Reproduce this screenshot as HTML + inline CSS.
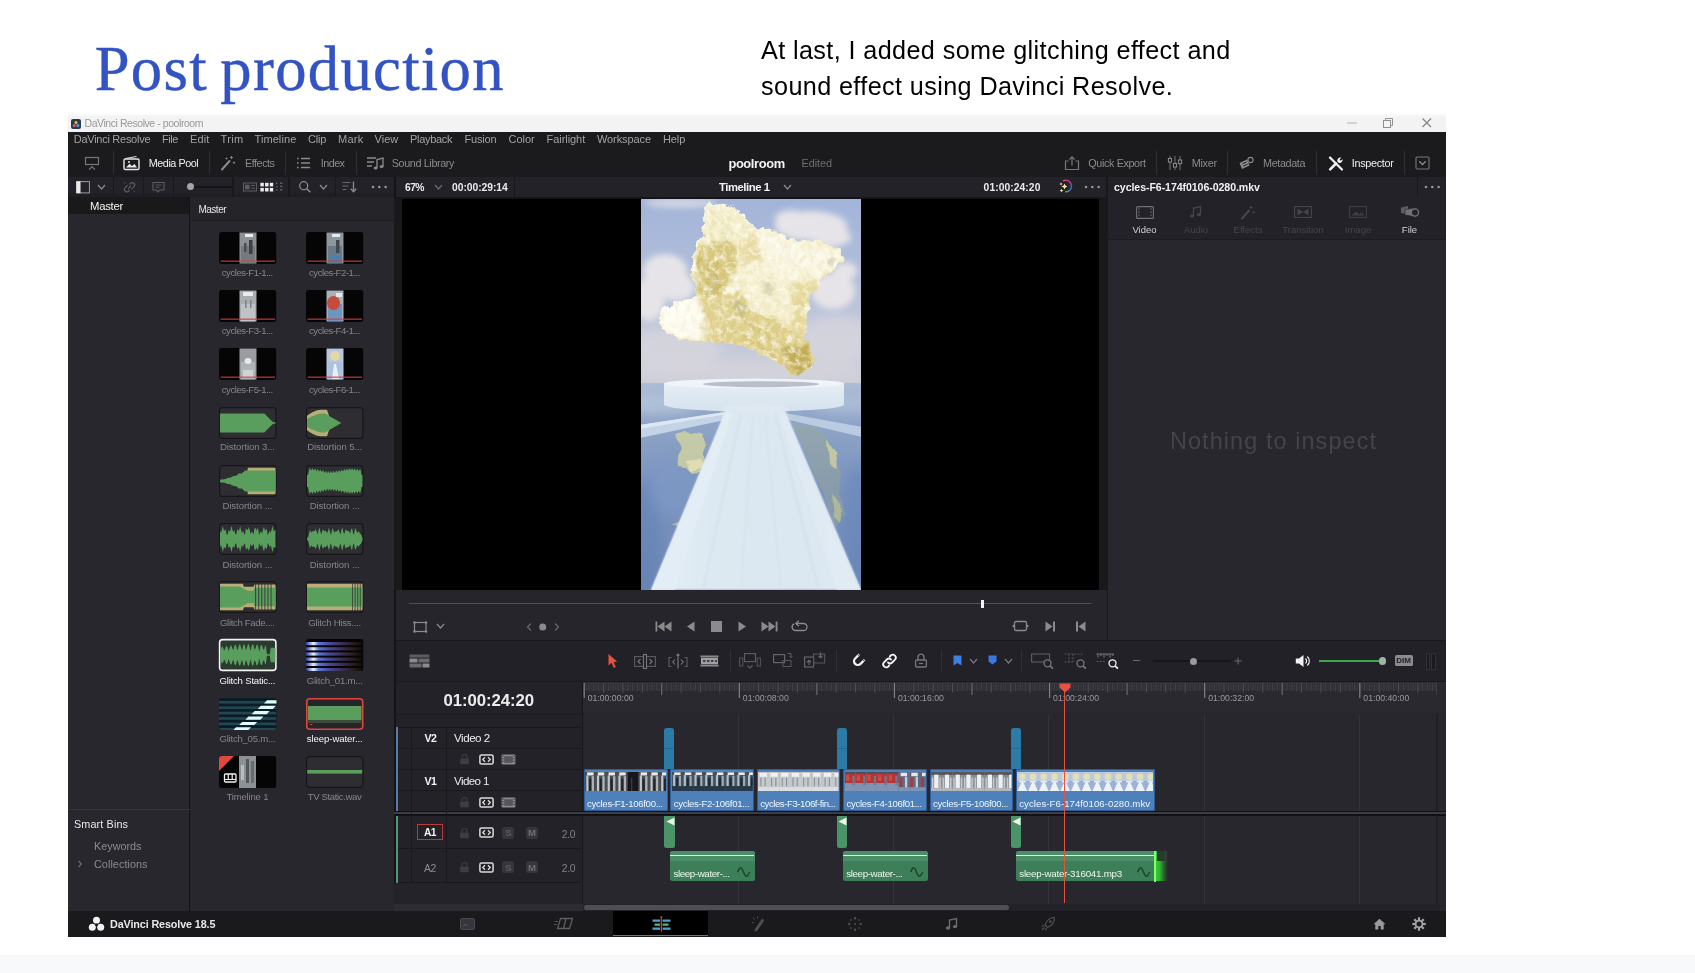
<!DOCTYPE html>
<html><head><meta charset="utf-8"><title>Post production</title>
<style>
html,body{margin:0;padding:0;background:#fff;}
body{width:1695px;height:973px;position:relative;overflow:hidden;font-family:"Liberation Sans",sans-serif;}
body div,body span,body svg{position:absolute;display:block;white-space:nowrap;}
body svg{overflow:visible;}
</style></head><body>
<div id="root" style="left:0;top:0;width:1695px;height:973px;will-change:transform;">
<div style="left:0.00px;top:955.00px;width:1695.00px;height:18.00px;background:#f8f9fb;"></div>
<span style="left:94.7px;top:32.5px;font-family:'Liberation Serif',serif;font-size:62.6px;line-height:72px;color:#3352c4;letter-spacing:1.33px;word-spacing:-4.500px;-webkit-text-stroke:0.450px #3352c4;">Post production</span>
<span style="left:761px;top:31.6px;font-size:25.2px;line-height:36.3px;color:#000;white-space:pre;letter-spacing:0.39px;">At last, I added some glitching effect and
sound effect using Davinci Resolve.</span>
<div style="left:68.00px;top:113.50px;width:1378.00px;height:18.50px;background:linear-gradient(180deg,#fbfbfb 0,#f3f3f3 3px);"></div>
<div style="left:68.00px;top:132.00px;width:1378.00px;height:44.50px;background:#1b1b1e;"></div>
<div style="left:68.00px;top:176.50px;width:1378.00px;height:20.50px;background:#222228;"></div>
<div style="left:68.00px;top:193.00px;width:326.00px;height:4.00px;background:#1e1e23;"></div>
<div style="left:68.00px;top:197.00px;width:1378.00px;height:713.50px;background:#28272e;"></div>
<div style="left:68.00px;top:910.50px;width:1378.00px;height:26.00px;background:#1a1a1d;"></div>
<svg style="left:70.50px;top:118.50px;" width="10" height="10" viewBox="0 0 10 10"><rect width="10" height="10" rx="2" fill="#2b3a4a"/><circle cx="5" cy="3.4" r="1.5" fill="#e8c23a"/><circle cx="3.2" cy="6.6" r="1.5" fill="#e05a4a"/><circle cx="6.8" cy="6.6" r="1.5" fill="#4aa0d8"/></svg>
<span style="left:84.50px;top:116.90px;font-size:10.5px;line-height:12.60px;color:#9a9a9a;font-weight:400;letter-spacing:-0.438px;">DaVinci Resolve - poolroom</span>
<svg style="left:1346.00px;top:118.00px;" width="12" height="10" viewBox="0 0 12 10"><path d="M1 5H11" stroke="#b0b0b0" stroke-width="1"/></svg>
<svg style="left:1383.00px;top:118.00px;" width="10" height="10" viewBox="0 0 10 10"><rect x="0.5" y="2.5" width="7" height="7" fill="none" stroke="#909090" stroke-width="1"/><path d="M2.5 2.5V0.5H9.5V7.5H7.5" fill="none" stroke="#909090" stroke-width="1"/></svg>
<svg style="left:1422.00px;top:118.00px;" width="10" height="10" viewBox="0 0 10 10"><path d="M0.5 0.5L9 9M9 0.5L0.5 9" stroke="#808080" stroke-width="1.1"/></svg>
<span style="left:73.75px;top:132.70px;font-size:11px;line-height:13.20px;color:#a2a2a4;font-weight:400;letter-spacing:-0.268px;">DaVinci Resolve</span>
<span style="left:162.00px;top:132.70px;font-size:11px;line-height:13.20px;color:#a2a2a4;font-weight:400;letter-spacing:-0.492px;">File</span>
<span style="left:190.00px;top:132.70px;font-size:11px;line-height:13.20px;color:#a2a2a4;font-weight:400;letter-spacing:0.098px;">Edit</span>
<span style="left:220.50px;top:132.70px;font-size:11px;line-height:13.20px;color:#a2a2a4;font-weight:400;letter-spacing:0.390px;">Trim</span>
<span style="left:254.50px;top:132.70px;font-size:11px;line-height:13.20px;color:#a2a2a4;font-weight:400;letter-spacing:0.084px;">Timeline</span>
<span style="left:308.00px;top:132.70px;font-size:11px;line-height:13.20px;color:#a2a2a4;font-weight:400;letter-spacing:-0.233px;">Clip</span>
<span style="left:338.00px;top:132.70px;font-size:11px;line-height:13.20px;color:#a2a2a4;font-weight:400;letter-spacing:0.269px;">Mark</span>
<span style="left:374.50px;top:132.70px;font-size:11px;line-height:13.20px;color:#a2a2a4;font-weight:400;letter-spacing:0.035px;">View</span>
<span style="left:410.00px;top:132.70px;font-size:11px;line-height:13.20px;color:#a2a2a4;font-weight:400;letter-spacing:-0.305px;">Playback</span>
<span style="left:464.50px;top:132.70px;font-size:11px;line-height:13.20px;color:#a2a2a4;font-weight:400;letter-spacing:-0.203px;">Fusion</span>
<span style="left:508.50px;top:132.70px;font-size:11px;line-height:13.20px;color:#a2a2a4;font-weight:400;letter-spacing:-0.009px;">Color</span>
<span style="left:546.50px;top:132.70px;font-size:11px;line-height:13.20px;color:#a2a2a4;font-weight:400;letter-spacing:-0.047px;">Fairlight</span>
<span style="left:597.00px;top:132.70px;font-size:11px;line-height:13.20px;color:#a2a2a4;font-weight:400;letter-spacing:-0.102px;">Workspace</span>
<span style="left:663.00px;top:132.70px;font-size:11px;line-height:13.20px;color:#a2a2a4;font-weight:400;letter-spacing:-0.124px;">Help</span>
<svg style="left:84.00px;top:156.00px;" width="16" height="15" viewBox="0 0 16 15"><rect x="1.5" y="1.5" width="13" height="7" fill="none" stroke="#77777b" stroke-width="1.2"/><path d="M5 13.5L8 10.8L11 13.5" fill="none" stroke="#77777b" stroke-width="1.3"/></svg>
<div style="left:112.80px;top:151.00px;width:1.00px;height:24.00px;background:#2e2e33;"></div>
<svg style="left:122.00px;top:155.00px;" width="19" height="16" viewBox="0 0 19 16"><path d="M3.5 3.5L14.5 1.5" stroke="#d8d8d8" stroke-width="1.2" fill="none"/><rect x="2" y="4" width="15" height="10.5" rx="1.2" fill="none" stroke="#e8e8e8" stroke-width="1.4"/><path d="M4 12.5L7.5 8.8L10 11L12.5 9L15 12.5Z" fill="#e8e8e8"/><circle cx="7" cy="7" r="1" fill="#e8e8e8"/></svg>
<span style="left:148.75px;top:156.52px;font-size:10.8px;line-height:12.96px;color:#f0f0f0;font-weight:400;letter-spacing:-0.448px;">Media Pool</span>
<div style="left:209.00px;top:151.00px;width:1.00px;height:24.00px;background:#2e2e33;"></div>
<svg style="left:220.00px;top:155.00px;" width="17" height="16" viewBox="0 0 17 16"><path d="M2 14.5L9.5 6" stroke="#8b8b8e" stroke-width="2" stroke-linecap="round"/><path d="M11.5 1v3M10 2.5h3M14 6.5v2.4M12.8 7.7h2.4M6.5 2.5v2M5.5 3.5h2" stroke="#8b8b8e" stroke-width="0.9"/></svg>
<span style="left:245.00px;top:156.52px;font-size:10.8px;line-height:12.96px;color:#8b8b8e;font-weight:400;letter-spacing:-0.469px;">Effects</span>
<div style="left:284.50px;top:151.00px;width:1.00px;height:24.00px;background:#2e2e33;"></div>
<svg style="left:296.00px;top:156.00px;" width="15" height="14" viewBox="0 0 15 14"><path d="M1 2.5h1.6M5 2.5h9M1 7h1.6M5 7h9M1 11.5h1.6M5 11.5h9" stroke="#8b8b8e" stroke-width="1.4"/></svg>
<span style="left:320.75px;top:156.52px;font-size:10.8px;line-height:12.96px;color:#8b8b8e;font-weight:400;letter-spacing:-0.543px;">Index</span>
<div style="left:355.80px;top:151.00px;width:1.00px;height:24.00px;background:#2e2e33;"></div>
<svg style="left:366.00px;top:155.00px;" width="19" height="16" viewBox="0 0 19 16"><path d="M1 3h9M1 7h7M1 11h5" stroke="#8b8b8e" stroke-width="1.3"/><path d="M11 13V4.5L17 3V11.5" fill="none" stroke="#8b8b8e" stroke-width="1.3"/><ellipse cx="9.6" cy="13" rx="1.9" ry="1.5" fill="#8b8b8e"/><ellipse cx="15.6" cy="11.6" rx="1.9" ry="1.5" fill="#8b8b8e"/></svg>
<span style="left:391.75px;top:156.52px;font-size:10.8px;line-height:12.96px;color:#8b8b8e;font-weight:400;letter-spacing:-0.374px;">Sound Library</span>
<span style="left:728.40px;top:155.76px;font-size:12.9px;line-height:15.48px;color:#f2f2f2;font-weight:700;letter-spacing:-0.382px;">poolroom</span>
<span style="left:801.50px;top:156.52px;font-size:10.8px;line-height:12.96px;color:#6f6f73;font-weight:400;letter-spacing:-0.025px;">Edited</span>
<svg style="left:1064.00px;top:155.00px;" width="16" height="16" viewBox="0 0 16 16"><path d="M4.5 6H1.5V14.5H14.5V6H11.5" fill="none" stroke="#77777b" stroke-width="1.2"/><path d="M8 10.5V2M5.3 4.6L8 1.8L10.7 4.6" fill="none" stroke="#77777b" stroke-width="1.2"/></svg>
<span style="left:1088.30px;top:156.52px;font-size:10.8px;line-height:12.96px;color:#8b8b8e;font-weight:400;letter-spacing:-0.375px;">Quick Export</span>
<div style="left:1155.80px;top:151.00px;width:1.00px;height:24.00px;background:#2e2e33;"></div>
<svg style="left:1167.00px;top:155.00px;" width="16" height="16" viewBox="0 0 16 16"><path d="M3 1v14M8 1v14M13 1v14" stroke="#77777b" stroke-width="1"/><rect x="1.4" y="3.5" width="3.2" height="3.6" fill="#1b1b1e" stroke="#8b8b8e" stroke-width="1"/><rect x="6.4" y="8.5" width="3.2" height="3.6" fill="#1b1b1e" stroke="#8b8b8e" stroke-width="1"/><rect x="11.4" y="5" width="3.2" height="3.6" fill="#1b1b1e" stroke="#8b8b8e" stroke-width="1"/></svg>
<span style="left:1191.75px;top:156.52px;font-size:10.8px;line-height:12.96px;color:#8b8b8e;font-weight:400;letter-spacing:-0.287px;">Mixer</span>
<div style="left:1227.00px;top:151.00px;width:1.00px;height:24.00px;background:#2e2e33;"></div>
<svg style="left:1238.00px;top:156.00px;" width="17" height="14" viewBox="0 0 17 14"><path d="M1.5 7L9 3.5L11.5 9.5L4 13Z" fill="#8b8b8e"/><circle cx="12.5" cy="4" r="2.6" fill="none" stroke="#8b8b8e" stroke-width="1.1"/><path d="M4.5 7.8L8.5 6M5.3 10L9.5 8.2" stroke="#1b1b1e" stroke-width="0.9"/></svg>
<span style="left:1263.00px;top:156.52px;font-size:10.8px;line-height:12.96px;color:#8b8b8e;font-weight:400;letter-spacing:-0.361px;">Metadata</span>
<div style="left:1315.80px;top:151.00px;width:1.00px;height:24.00px;background:#2e2e33;"></div>
<svg style="left:1328.00px;top:155.50px;" width="16" height="15" viewBox="0 0 16 15"><path d="M2 1.5L14 13.5" stroke="#f2f2f2" stroke-width="2.2" stroke-linecap="round"/><path d="M2.2 13.3L8 7.5" stroke="#f2f2f2" stroke-width="2.6" stroke-linecap="round"/><path d="M9.5 5.8C8.8 3.5 10.5 1 13.3 1.6L11.6 3.6L12.6 4.8L14.6 3.2C15 5.8 12.6 7.4 10.6 6.8Z" fill="#f2f2f2"/></svg>
<span style="left:1351.75px;top:156.52px;font-size:10.8px;line-height:12.96px;color:#f0f0f0;font-weight:400;letter-spacing:-0.303px;">Inspector</span>
<div style="left:1404.00px;top:151.00px;width:1.00px;height:24.00px;background:#2e2e33;"></div>
<svg style="left:1415.00px;top:156.00px;" width="15" height="14" viewBox="0 0 15 14"><rect x="1" y="1" width="13" height="12" rx="1" fill="none" stroke="#77777b" stroke-width="1.1"/><path d="M4.3 5.3L7.5 8.5L10.7 5.3" fill="none" stroke="#8b8b8e" stroke-width="1.3"/></svg>
<svg style="left:75.50px;top:180.50px;" width="14" height="12.5" viewBox="0 0 14 12.5"><rect x="0.6" y="0.6" width="12.8" height="11.3" fill="none" stroke="#9c9ca0" stroke-width="1"/><rect x="0.3" y="0.3" width="4.200" height="11.900" fill="#ececec"/></svg>
<svg style="left:96.80px;top:184.20px;" width="9" height="6" viewBox="0 0 9 6"><path d="M1 1L4.5 5L8 1" fill="none" stroke="#8b8b8e" stroke-width="1.2"/></svg>
<div style="left:112.55px;top:177.00px;width:1.50px;height:19.50px;background:#19191c;"></div>
<svg style="left:121.50px;top:180.00px;" width="15" height="14" viewBox="0 0 15 14"><path d="M6.2 8.8L8.8 5.6M5.5 5.2L3 7.8a2.4 2.4 0 0 0 3.6 3.2L7.6 10M9.5 9.2L12 6.6a2.4 2.4 0 0 0 -3.6 -3.2L7.4 4.4" fill="none" stroke="#5d5d62" stroke-width="1.2"/><path d="M2 2l1.5 1.5M13 12l-1.5 -1.5" stroke="#5d5d62" stroke-width="0.8"/></svg>
<div style="left:142.55px;top:177.00px;width:1.50px;height:19.50px;background:#19191c;"></div>
<svg style="left:151.00px;top:180.50px;" width="15" height="13" viewBox="0 0 15 13"><path d="M2 1.5H13V9H8.5L7 11L5.5 9H2Z" fill="none" stroke="#5d5d62" stroke-width="1.1"/><path d="M4.5 4h6M4.5 6.3h4" stroke="#5d5d62" stroke-width="0.9"/></svg>
<div style="left:172.55px;top:177.00px;width:1.50px;height:19.50px;background:#19191c;"></div>
<div style="left:194.00px;top:185.90px;width:38.50px;height:1.80px;background:#151518;"></div>
<div style="left:187.30px;top:183.30px;width:7.00px;height:7.00px;background:#a5a5a8;border-radius:50%;"></div>
<div style="left:232.25px;top:177.00px;width:1.50px;height:19.50px;background:#19191c;"></div>
<svg style="left:243.00px;top:182.00px;" width="14" height="10" viewBox="0 0 14 10"><rect x="0.5" y="1" width="13" height="8" fill="none" stroke="#5d5d62" stroke-width="1"/><rect x="2" y="2.7" width="4.5" height="4.6" fill="#5d5d62"/><path d="M8 3.5h4M8 6.2h4" stroke="#5d5d62" stroke-width="1"/></svg>
<svg style="left:259.50px;top:181.70px;" width="14" height="11" viewBox="0 0 14 11"><rect x="0.4" y="0.8" width="3.4" height="3.600" fill="#f0f0f0"/><rect x="0.4" y="5.8999999999999995" width="3.4" height="3.600" fill="#f0f0f0"/><rect x="5.1000000000000005" y="0.8" width="3.4" height="3.600" fill="#f0f0f0"/><rect x="5.1000000000000005" y="5.8999999999999995" width="3.4" height="3.600" fill="#f0f0f0"/><rect x="9.8" y="0.8" width="3.4" height="3.600" fill="#f0f0f0"/><rect x="9.8" y="5.8999999999999995" width="3.4" height="3.600" fill="#f0f0f0"/></svg>
<svg style="left:275.00px;top:182.00px;" width="9" height="10" viewBox="0 0 9 10"><rect x="1" y="0.5" width="1.4" height="1.5" fill="#5d5d62"/><rect x="1" y="3.8" width="1.4" height="1.5" fill="#5d5d62"/><rect x="1" y="7.1" width="1.4" height="1.5" fill="#5d5d62"/><rect x="5" y="0.5" width="2.4" height="1.5" fill="#5d5d62"/><rect x="5" y="3.8" width="2.4" height="1.5" fill="#5d5d62"/><rect x="5" y="7.1" width="2.4" height="1.5" fill="#5d5d62"/></svg>
<div style="left:288.05px;top:177.00px;width:1.50px;height:19.50px;background:#19191c;"></div>
<svg style="left:298.00px;top:180.00px;" width="14" height="14" viewBox="0 0 14 14"><circle cx="5.7" cy="5.7" r="4" fill="none" stroke="#8b8b8e" stroke-width="1.3"/><path d="M8.7 8.7L12.3 12.3" stroke="#8b8b8e" stroke-width="1.5"/></svg>
<svg style="left:318.50px;top:184.40px;" width="9" height="6" viewBox="0 0 9 6"><path d="M1 1L4.5 5L8 1" fill="none" stroke="#8b8b8e" stroke-width="1.2"/></svg>
<div style="left:334.55px;top:177.00px;width:1.50px;height:19.50px;background:#19191c;"></div>
<svg style="left:342.00px;top:181.00px;" width="16" height="12" viewBox="0 0 16 12"><path d="M0.5 1.5h8M0.5 5h6M0.5 8.5h4" stroke="#6a6a6f" stroke-width="1.2"/><path d="M11.5 0.5V10.5M8.8 7.8L11.5 10.8L14.2 7.8" fill="none" stroke="#8b8b8e" stroke-width="1.3"/></svg>
<svg style="left:371.20px;top:184.70px;" width="16.6" height="4" viewBox="0 0 16.6 4"><circle cx="2.0" cy="2" r="1.3" fill="#96969a"/><circle cx="8.3" cy="2" r="1.3" fill="#96969a"/><circle cx="14.6" cy="2" r="1.3" fill="#96969a"/></svg>
<div style="left:394.00px;top:176.50px;width:2.40px;height:21.00px;background:#141418;"></div>
<span style="left:405.00px;top:181.82px;font-size:10.3px;line-height:12.36px;color:#ececec;font-weight:700;letter-spacing:-0.558px;">67%</span>
<svg style="left:433.80px;top:184.20px;" width="9" height="6" viewBox="0 0 9 6"><path d="M1 1L4.5 5L8 1" fill="none" stroke="#6a6a6f" stroke-width="1.2"/></svg>
<span style="left:452.00px;top:181.82px;font-size:10.3px;line-height:12.36px;color:#ececec;font-weight:700;letter-spacing:-0.037px;">00:00:29:14</span>
<div style="left:513.75px;top:177.00px;width:1.50px;height:19.50px;background:#19191c;"></div>
<span style="left:719.00px;top:180.72px;font-size:11.3px;line-height:13.56px;color:#f2f2f2;font-weight:700;letter-spacing:-0.451px;">Timeline 1</span>
<svg style="left:782.80px;top:184.30px;" width="9" height="6" viewBox="0 0 9 6"><path d="M1 1L4.5 5L8 1" fill="none" stroke="#8b8b8e" stroke-width="1.2"/></svg>
<span style="left:983.60px;top:181.82px;font-size:10.3px;line-height:12.36px;color:#ececec;font-weight:700;letter-spacing:0.068px;">01:00:24:20</span>
<svg style="left:1058.20px;top:178.60px;" width="14" height="14" viewBox="0 0 14 14"><path d="M7.500 1.200a5.800 5.800 0 0 1 5.600 4" fill="none" stroke="#c23c8e" stroke-width="1.500"/><path d="M13.100 5.200a5.800 5.800 0 0 1 -1.300 6" fill="none" stroke="#4a5fd0" stroke-width="1.500"/><path d="M11.800 11.200a5.800 5.800 0 0 1 -4.800 1.600" fill="none" stroke="#3aa37a" stroke-width="1.500"/><path d="M7.500 1.200a5.800 5.800 0 0 0 -2.500 0.700" fill="none" stroke="#d05a6a" stroke-width="1.400"/><path d="M6.500 4.500l0.900 2.100l2.100 0.900l-2.100 0.900l-0.900 2.100l-0.900 -2.100l-2.100 -0.900l2.100 -0.900z" fill="#f3e6b0"/><path d="M3 3.300l0.500 1.100l1.100 0.500l-1.100 0.500l-0.500 1.100l-0.500 -1.100l-1.100 -0.500l1.100 -0.500zM3.500 9.800l0.600 1.300l1.300 0.600l-1.300 0.600l-0.600 1.300l-0.600 -1.300l-1.300 -0.600l1.300 -0.600z" fill="#f3e6b0"/></svg>
<svg style="left:1083.50px;top:184.70px;" width="16.6" height="4" viewBox="0 0 16.6 4"><circle cx="2.0" cy="2" r="1.3" fill="#96969a"/><circle cx="8.3" cy="2" r="1.3" fill="#96969a"/><circle cx="14.6" cy="2" r="1.3" fill="#96969a"/></svg>
<div style="left:1105.80px;top:176.50px;width:2.20px;height:21.00px;background:#19191c;"></div>
<span style="left:1114.00px;top:181.04px;font-size:10.6px;line-height:12.72px;color:#f2f2f2;font-weight:700;letter-spacing:-0.074px;">cycles-F6-174f0106-0280.mkv</span>
<div style="left:1416.55px;top:177.00px;width:1.50px;height:19.50px;background:#19191c;"></div>
<svg style="left:1423.70px;top:184.70px;" width="16.6" height="4" viewBox="0 0 16.6 4"><circle cx="2.0" cy="2" r="1.3" fill="#96969a"/><circle cx="8.3" cy="2" r="1.3" fill="#96969a"/><circle cx="14.6" cy="2" r="1.3" fill="#96969a"/></svg>
<div style="left:190.20px;top:196.50px;width:203.60px;height:23.50px;background:#242429;"></div>
<div style="left:68.00px;top:197.00px;width:122.00px;height:17.00px;background:#19191c;"></div>
<span style="left:90.00px;top:199.62px;font-size:11.3px;line-height:13.56px;color:#f2f2f2;font-weight:400;letter-spacing:-0.247px;">Master</span>
<div style="left:188.70px;top:197.00px;width:1.50px;height:713.50px;background:#131317;"></div>
<div style="left:393.80px;top:197.00px;width:8.20px;height:393.00px;background:#19191c;"></div>
<div style="left:393.80px;top:590.00px;width:1.20px;height:51.00px;background:#19191c;"></div>
<span style="left:198.40px;top:204.00px;font-size:10.0px;line-height:12.00px;color:#e4e4e4;font-weight:400;letter-spacing:-0.472px;">Master</span>
<div style="left:191.00px;top:220.00px;width:202.80px;height:1.00px;background:#1c1c1f;"></div>
<div style="left:68.00px;top:808.50px;width:121.50px;height:1.00px;background:#35353b;"></div>
<span style="left:74.00px;top:817.52px;font-size:10.8px;line-height:12.96px;color:#e8e8e8;font-weight:400;letter-spacing:0.132px;">Smart Bins</span>
<span style="left:94.00px;top:839.52px;font-size:10.8px;line-height:12.96px;color:#8b8b8e;font-weight:400;letter-spacing:0.012px;">Keywords</span>
<span style="left:94.00px;top:857.52px;font-size:10.8px;line-height:12.96px;color:#8b8b8e;font-weight:400;letter-spacing:0.068px;">Collections</span>
<svg style="left:76.50px;top:860.00px;" width="6" height="8" viewBox="0 0 6 8"><path d="M1.5 1L4.5 4L1.5 7" fill="none" stroke="#6a6a6f" stroke-width="1.1"/></svg>
<svg style="left:218.75px;top:232.00px;" width="57.5" height="32" viewBox="0 0 57.5 32"><clipPath id="tc00"><rect width="57.5" height="32" rx="3"/></clipPath><g clip-path="url(#tc00)"><rect width="57.5" height="32" fill="#050506"/><rect x="20.5" y="0.5" width="17" height="31" fill="#8d9194"/><rect x="22" y="14" width="14" height="17.5" fill="#6f7478" opacity="0.8"/><rect x="26" y="2" width="8" height="3" fill="#e8ecef"/><rect x="30" y="8" width="3.5" height="14" fill="#3d4145"/><rect x="25" y="11" width="2.5" height="9" fill="#4a4e52"/><rect x="1.5" y="28.6" width="54.5" height="1.1" fill="#d33c3c"/></g></svg>
<svg style="left:306.00px;top:232.00px;" width="57.5" height="32" viewBox="0 0 57.5 32"><clipPath id="tc10"><rect width="57.5" height="32" rx="3"/></clipPath><g clip-path="url(#tc10)"><rect width="57.5" height="32" fill="#050506"/><rect x="20.5" y="0.5" width="17" height="31" fill="#90979c"/><rect x="22" y="14" width="14" height="17.5" fill="#5d7386" opacity="0.8"/><rect x="26" y="2" width="8" height="3" fill="#e4eaee"/><rect x="30" y="8" width="3.5" height="13" fill="#41474c"/><rect x="24" y="24" width="11" height="6" fill="#4f7fa8"/><rect x="1.5" y="28.6" width="54.5" height="1.1" fill="#d33c3c"/></g></svg>
<svg style="left:218.75px;top:290.00px;" width="57.5" height="32" viewBox="0 0 57.5 32"><clipPath id="tc01"><rect width="57.5" height="32" rx="3"/></clipPath><g clip-path="url(#tc01)"><rect width="57.5" height="32" fill="#050506"/><rect x="20.5" y="0.5" width="17" height="31" fill="#a9adb0"/><rect x="22" y="14" width="14" height="17.5" fill="#c4c7c9" opacity="0.8"/><rect x="24" y="2" width="10" height="4" fill="#e9ecee"/><rect x="26" y="10" width="1.5" height="8" fill="#7c8084"/><rect x="31" y="10" width="1.5" height="8" fill="#7c8084"/><rect x="1.5" y="28.6" width="54.5" height="1.1" fill="#d33c3c"/></g></svg>
<svg style="left:306.00px;top:290.00px;" width="57.5" height="32" viewBox="0 0 57.5 32"><clipPath id="tc11"><rect width="57.5" height="32" rx="3"/></clipPath><g clip-path="url(#tc11)"><rect width="57.5" height="32" fill="#050506"/><rect x="20.5" y="0.5" width="17" height="31" fill="#a8b0b8"/><rect x="22" y="14" width="14" height="17.5" fill="#5f8fc0" opacity="0.8"/><ellipse cx="27.5" cy="13" rx="6.5" ry="7" fill="#c84a3c"/><rect x="30" y="3" width="6" height="4" fill="#e4e8ec"/><rect x="1.5" y="28.6" width="54.5" height="1.1" fill="#d33c3c"/></g></svg>
<svg style="left:218.75px;top:348.00px;" width="57.5" height="32" viewBox="0 0 57.5 32"><clipPath id="tc02"><rect width="57.5" height="32" rx="3"/></clipPath><g clip-path="url(#tc02)"><rect width="57.5" height="32" fill="#050506"/><rect x="20.5" y="0.5" width="17" height="31" fill="#9a9da0"/><rect x="22" y="14" width="14" height="17.5" fill="#b7babc" opacity="0.8"/><ellipse cx="29" cy="13" rx="3.5" ry="3" fill="#e6e8ea"/><rect x="24" y="22" width="10" height="8" fill="#d0d3d5"/><rect x="1.5" y="28.6" width="54.5" height="1.1" fill="#d33c3c"/></g></svg>
<svg style="left:306.00px;top:348.00px;" width="57.5" height="32" viewBox="0 0 57.5 32"><clipPath id="tc12"><rect width="57.5" height="32" rx="3"/></clipPath><g clip-path="url(#tc12)"><rect width="57.5" height="32" fill="#050506"/><rect x="20.5" y="0.5" width="17" height="31" fill="#b9c6dc"/><rect x="22" y="14" width="14" height="17.5" fill="#a7c0dc" opacity="0.8"/><ellipse cx="29" cy="8" rx="5" ry="5" fill="#e3d9a4"/><path d="M26 31L28 16H30L33 31Z" fill="#e9f0f6"/><rect x="1.5" y="28.6" width="54.5" height="1.1" fill="#d33c3c"/></g></svg>
<svg style="left:218.75px;top:406.70px;" width="57.5" height="32" viewBox="0 0 57.5 32"><rect x="0.6" y="0.6" width="56.3" height="30.8" rx="3" fill="#2d2d32" stroke="#17171a" stroke-width="1.2"/><polygon points="1.0,6.5 2.0,6.5 2.9,6.5 3.9,6.5 4.8,6.5 5.8,6.5 6.7,6.5 7.7,6.5 8.7,6.5 9.6,6.5 10.6,6.5 11.5,6.5 12.5,6.5 13.4,6.5 14.4,6.5 15.4,6.5 16.3,6.5 17.3,6.5 18.2,6.5 19.2,6.5 20.1,6.5 21.1,6.5 22.1,6.5 23.0,6.5 24.0,6.5 24.9,6.5 25.9,6.5 26.8,6.5 27.8,6.5 28.8,6.5 29.7,6.5 30.7,6.5 31.6,6.5 32.6,6.5 33.5,6.5 34.5,6.5 35.4,6.5 36.4,6.5 37.4,6.5 38.3,6.5 39.3,6.5 40.2,6.5 41.2,6.5 42.1,6.5 43.1,6.5 44.1,6.5 45.0,6.5 46.0,7.1 46.9,8.0 47.9,9.0 48.8,10.0 49.8,10.9 50.8,11.9 51.7,12.9 52.7,13.8 53.6,14.8 54.6,15.3 55.5,15.3 56.5,15.3 56.5,16.7 55.5,16.7 54.6,16.7 53.6,17.2 52.7,18.2 51.7,19.1 50.8,20.1 49.8,21.1 48.8,22.0 47.9,23.0 46.9,24.0 46.0,24.9 45.0,25.5 44.1,25.5 43.1,25.5 42.1,25.5 41.2,25.5 40.2,25.5 39.3,25.5 38.3,25.5 37.4,25.5 36.4,25.5 35.4,25.5 34.5,25.5 33.5,25.5 32.6,25.5 31.6,25.5 30.7,25.5 29.7,25.5 28.8,25.5 27.8,25.5 26.8,25.5 25.9,25.5 24.9,25.5 24.0,25.5 23.0,25.5 22.1,25.5 21.1,25.5 20.1,25.5 19.2,25.5 18.2,25.5 17.3,25.5 16.3,25.5 15.4,25.5 14.4,25.5 13.4,25.5 12.5,25.5 11.5,25.5 10.6,25.5 9.6,25.5 8.7,25.5 7.7,25.5 6.7,25.5 5.8,25.5 4.8,25.5 3.9,25.5 2.9,25.5 2.0,25.5 1.0,25.5" fill="#5a9e5e"/></svg>
<svg style="left:306.00px;top:406.70px;" width="57.5" height="32" viewBox="0 0 57.5 32"><rect x="0.6" y="0.6" width="56.3" height="30.8" rx="3" fill="#2d2d32" stroke="#17171a" stroke-width="1.2"/><polygon points="1.0,8.7 2.0,8.1 2.9,7.5 3.9,6.8 4.8,6.2 5.8,5.7 6.7,5.1 7.7,4.7 8.7,4.2 9.6,3.8 10.6,3.5 11.5,3.2 12.5,3.0 13.4,2.9 14.4,2.8 15.4,2.8 16.3,2.8 17.3,2.8 18.2,2.8 19.2,2.8 20.1,2.8 21.1,3.1 22.1,6.0 23.0,8.8 24.0,11.7 24.9,14.5 25.9,16.0 26.8,16.0 27.8,16.0 28.8,16.0 29.7,16.0 30.7,16.0 31.6,16.0 32.6,16.0 33.5,16.0 34.5,16.0 35.4,16.0 36.4,16.0 37.4,16.0 38.3,16.0 39.3,16.0 40.2,16.0 41.2,16.0 42.1,16.0 43.1,16.0 44.1,16.0 45.0,16.0 46.0,16.0 46.9,16.0 47.9,16.0 48.8,16.0 49.8,16.0 50.8,16.0 51.7,16.0 52.7,16.0 53.6,16.0 54.6,16.0 55.5,16.0 56.5,16.0 56.5,16.0 55.5,16.0 54.6,16.0 53.6,16.0 52.7,16.0 51.7,16.0 50.8,16.0 49.8,16.0 48.8,16.0 47.9,16.0 46.9,16.0 46.0,16.0 45.0,16.0 44.1,16.0 43.1,16.0 42.1,16.0 41.2,16.0 40.2,16.0 39.3,16.0 38.3,16.0 37.4,16.0 36.4,16.0 35.4,16.0 34.5,16.0 33.5,16.0 32.6,16.0 31.6,16.0 30.7,16.0 29.7,16.0 28.8,16.0 27.8,16.0 26.8,16.0 25.9,16.0 24.9,17.5 24.0,20.3 23.0,23.2 22.1,26.0 21.1,28.9 20.1,29.2 19.2,29.2 18.2,29.2 17.3,29.2 16.3,29.2 15.4,29.2 14.4,29.2 13.4,29.1 12.5,29.0 11.5,28.8 10.6,28.5 9.6,28.2 8.7,27.8 7.7,27.3 6.7,26.9 5.8,26.3 4.8,25.8 3.9,25.2 2.9,24.5 2.0,23.9 1.0,23.3" fill="#b9ac74"/><polygon points="1.0,12.1 2.0,11.6 2.9,11.1 3.9,10.6 4.8,10.1 5.8,9.6 6.7,9.2 7.7,8.8 8.7,8.4 9.6,8.0 10.6,7.7 11.5,7.4 12.5,7.1 13.4,6.9 14.4,6.7 15.4,6.6 16.3,6.5 17.3,6.5 18.2,6.5 19.2,6.7 20.1,7.3 21.1,7.8 22.1,8.3 23.0,8.9 24.0,9.4 24.9,10.0 25.9,10.5 26.8,11.1 27.8,11.6 28.8,12.2 29.7,12.7 30.7,13.3 31.6,13.8 32.6,14.4 33.5,14.9 34.5,15.5 35.4,16.0 36.4,16.0 37.4,16.0 38.3,16.0 39.3,16.0 40.2,16.0 41.2,16.0 42.1,16.0 43.1,16.0 44.1,16.0 45.0,16.0 46.0,16.0 46.9,16.0 47.9,16.0 48.8,16.0 49.8,16.0 50.8,16.0 51.7,16.0 52.7,16.0 53.6,16.0 54.6,16.0 55.5,16.0 56.5,16.0 56.5,16.0 55.5,16.0 54.6,16.0 53.6,16.0 52.7,16.0 51.7,16.0 50.8,16.0 49.8,16.0 48.8,16.0 47.9,16.0 46.9,16.0 46.0,16.0 45.0,16.0 44.1,16.0 43.1,16.0 42.1,16.0 41.2,16.0 40.2,16.0 39.3,16.0 38.3,16.0 37.4,16.0 36.4,16.0 35.4,16.0 34.5,16.5 33.5,17.1 32.6,17.6 31.6,18.2 30.7,18.7 29.7,19.3 28.8,19.8 27.8,20.4 26.8,20.9 25.9,21.5 24.9,22.0 24.0,22.6 23.0,23.1 22.1,23.7 21.1,24.2 20.1,24.7 19.2,25.3 18.2,25.5 17.3,25.5 16.3,25.5 15.4,25.4 14.4,25.3 13.4,25.1 12.5,24.9 11.5,24.6 10.6,24.3 9.6,24.0 8.7,23.6 7.7,23.2 6.7,22.8 5.8,22.4 4.8,21.9 3.9,21.4 2.9,20.9 2.0,20.4 1.0,19.9" fill="#5a9e5e"/></svg>
<svg style="left:218.75px;top:464.90px;" width="57.5" height="32" viewBox="0 0 57.5 32"><rect x="0.6" y="0.6" width="56.3" height="30.8" rx="3" fill="#2d2d32" stroke="#17171a" stroke-width="1.2"/><polygon points="1.0,16.0 2.0,16.0 2.9,16.0 3.9,16.0 4.8,16.0 5.8,16.0 6.7,16.0 7.7,16.0 8.7,16.0 9.6,16.0 10.6,16.0 11.5,16.0 12.5,16.0 13.4,16.0 14.4,16.0 15.4,16.0 16.3,16.0 17.3,16.0 18.2,16.0 19.2,16.0 20.1,16.0 21.1,16.0 22.1,16.0 23.0,16.0 24.0,16.0 24.9,16.0 25.9,16.0 26.8,16.0 27.8,16.0 28.8,2.8 29.7,2.8 30.7,2.8 31.6,2.8 32.6,2.8 33.5,2.8 34.5,2.8 35.4,2.8 36.4,2.8 37.4,2.8 38.3,2.8 39.3,2.8 40.2,2.8 41.2,2.8 42.1,2.8 43.1,2.8 44.1,2.8 45.0,2.8 46.0,2.8 46.9,2.8 47.9,2.8 48.8,2.8 49.8,2.8 50.8,2.8 51.7,2.8 52.7,2.8 53.6,2.8 54.6,2.8 55.5,2.8 56.5,2.8 56.5,29.2 55.5,29.2 54.6,29.2 53.6,29.2 52.7,29.2 51.7,29.2 50.8,29.2 49.8,29.2 48.8,29.2 47.9,29.2 46.9,29.2 46.0,29.2 45.0,29.2 44.1,29.2 43.1,29.2 42.1,29.2 41.2,29.2 40.2,29.2 39.3,29.2 38.3,29.2 37.4,29.2 36.4,29.2 35.4,29.2 34.5,29.2 33.5,29.2 32.6,29.2 31.6,29.2 30.7,29.2 29.7,29.2 28.8,29.2 27.8,16.0 26.8,16.0 25.9,16.0 24.9,16.0 24.0,16.0 23.0,16.0 22.1,16.0 21.1,16.0 20.1,16.0 19.2,16.0 18.2,16.0 17.3,16.0 16.3,16.0 15.4,16.0 14.4,16.0 13.4,16.0 12.5,16.0 11.5,16.0 10.6,16.0 9.6,16.0 8.7,16.0 7.7,16.0 6.7,16.0 5.8,16.0 4.8,16.0 3.9,16.0 2.9,16.0 2.0,16.0 1.0,16.0" fill="#b9ac74"/><polygon points="1.0,14.7 2.0,14.6 2.9,14.5 3.9,14.3 4.8,14.4 5.8,14.0 6.7,13.9 7.7,13.3 8.7,13.0 9.6,13.1 10.6,12.6 11.5,13.0 12.5,11.8 13.4,11.7 14.4,10.9 15.4,10.8 16.3,11.2 17.3,10.3 18.2,10.5 19.2,8.6 20.1,8.8 21.1,8.2 22.1,8.4 23.0,8.7 24.0,7.0 24.9,7.1 25.9,4.9 26.8,5.9 27.8,5.3 28.8,5.4 29.7,5.4 30.7,5.4 31.6,5.4 32.6,5.4 33.5,5.4 34.5,5.4 35.4,5.4 36.4,5.4 37.4,5.4 38.3,5.4 39.3,5.4 40.2,5.4 41.2,5.4 42.1,5.4 43.1,5.4 44.1,5.4 45.0,5.4 46.0,5.4 46.9,5.4 47.9,5.4 48.8,5.4 49.8,5.4 50.8,5.4 51.7,5.4 52.7,5.4 53.6,5.4 54.6,5.4 55.5,5.4 56.5,5.4 56.5,26.6 55.5,26.6 54.6,26.6 53.6,26.6 52.7,26.6 51.7,26.6 50.8,26.6 49.8,26.6 48.8,26.6 47.9,26.6 46.9,26.6 46.0,26.6 45.0,26.6 44.1,26.6 43.1,26.6 42.1,26.6 41.2,26.6 40.2,26.6 39.3,26.6 38.3,26.6 37.4,26.6 36.4,26.6 35.4,26.6 34.5,26.6 33.5,26.6 32.6,26.6 31.6,26.6 30.7,26.6 29.7,26.6 28.8,26.6 27.8,26.7 26.8,26.1 25.9,27.1 24.9,24.9 24.0,25.0 23.0,23.3 22.1,23.6 21.1,23.8 20.1,23.2 19.2,23.4 18.2,21.5 17.3,21.7 16.3,20.8 15.4,21.2 14.4,21.1 13.4,20.3 12.5,20.2 11.5,19.0 10.6,19.4 9.6,18.9 8.7,19.0 7.7,18.7 6.7,18.1 5.8,18.0 4.8,17.6 3.9,17.7 2.9,17.5 2.0,17.4 1.0,17.3" fill="#5a9e5e"/></svg>
<svg style="left:306.00px;top:464.90px;" width="57.5" height="32" viewBox="0 0 57.5 32"><rect x="0.6" y="0.6" width="56.3" height="30.8" rx="3" fill="#2d2d32" stroke="#17171a" stroke-width="1.2"/><polygon points="1.0,10.1 2.0,10.1 2.9,5.2 3.9,2.8 4.8,5.2 5.8,4.6 6.7,3.1 7.7,5.8 8.7,4.1 9.6,4.0 10.6,6.4 11.5,4.0 12.5,5.3 13.4,6.6 14.4,4.3 15.4,6.7 16.3,6.6 17.3,5.0 18.2,7.8 19.2,6.4 20.1,5.9 21.1,8.4 22.1,6.0 23.0,6.9 24.0,8.4 24.9,5.8 25.9,7.7 26.8,7.7 27.8,5.6 28.8,8.1 29.7,6.6 30.7,5.6 31.6,7.9 32.6,5.4 33.5,5.7 34.5,7.1 35.4,4.3 36.4,5.9 37.4,6.0 38.3,3.6 39.3,6.0 40.2,4.7 41.2,3.4 42.1,5.9 43.1,3.6 44.1,3.8 45.0,5.6 46.0,3.0 46.9,4.5 47.9,5.3 48.8,3.0 49.8,5.5 50.8,4.9 51.7,3.6 52.7,6.4 53.6,4.6 54.6,4.7 55.5,10.1 56.5,10.1 56.5,21.9 55.5,21.9 54.6,27.3 53.6,27.4 52.7,25.6 51.7,28.4 50.8,27.1 49.8,26.5 48.8,29.0 47.9,26.7 46.9,27.5 46.0,29.0 45.0,26.4 44.1,28.2 43.1,28.4 42.1,26.1 41.2,28.6 40.2,27.3 39.3,26.0 38.3,28.4 37.4,26.0 36.4,26.1 35.4,27.7 34.5,24.9 33.5,26.3 32.6,26.6 31.6,24.1 30.7,26.4 29.7,25.4 28.8,23.9 27.8,26.4 26.8,24.3 25.9,24.3 24.9,26.2 24.0,23.6 23.0,25.1 22.1,26.0 21.1,23.6 20.1,26.1 19.2,25.6 18.2,24.2 17.3,27.0 16.3,25.4 15.4,25.3 14.4,27.7 13.4,25.4 12.5,26.7 11.5,28.0 10.6,25.6 9.6,28.0 8.7,27.9 7.7,26.2 6.7,28.9 5.8,27.4 4.8,26.8 3.9,29.2 2.9,26.8 2.0,21.9 1.0,21.9" fill="#5a9e5e"/></svg>
<svg style="left:218.75px;top:523.30px;" width="57.5" height="32" viewBox="0 0 57.5 32"><rect x="0.6" y="0.6" width="56.3" height="30.8" rx="3" fill="#2d2d32" stroke="#17171a" stroke-width="1.2"/><polygon points="1.0,7.4 2.0,10.1 2.9,6.8 3.9,3.0 4.8,7.4 5.8,7.6 6.7,6.3 7.7,11.7 8.7,11.2 9.6,6.7 10.6,8.8 11.5,7.1 12.5,2.8 13.4,7.1 14.4,9.1 15.4,6.8 16.3,11.2 17.3,11.6 18.2,6.1 19.2,7.4 20.1,7.4 21.1,3.1 22.1,6.9 23.0,10.3 24.0,7.6 24.9,10.4 25.9,11.7 26.8,5.8 27.8,6.0 28.8,7.6 29.7,3.8 30.7,6.7 31.6,11.3 32.6,8.4 33.5,9.4 34.5,11.5 35.4,5.7 36.4,4.7 37.4,7.8 38.3,4.9 39.3,6.6 40.2,12.0 41.2,9.2 42.1,8.3 43.1,10.8 44.1,5.8 45.0,3.7 46.0,7.9 46.9,6.2 47.9,6.6 48.8,12.3 49.8,10.0 50.8,7.3 51.7,9.9 52.7,6.1 53.6,3.1 54.6,7.9 55.5,7.7 56.5,6.8 56.5,25.2 55.5,24.3 54.6,24.1 53.6,28.9 52.7,25.9 51.7,22.1 50.8,24.7 49.8,22.0 48.8,19.7 47.9,25.4 46.9,25.8 46.0,24.1 45.0,28.3 44.1,26.2 43.1,21.2 42.1,23.7 41.2,22.8 40.2,20.0 39.3,25.4 38.3,27.1 37.4,24.2 36.4,27.3 35.4,26.3 34.5,20.5 33.5,22.6 32.6,23.6 31.6,20.7 30.7,25.3 29.7,28.2 28.8,24.4 27.8,26.0 26.8,26.2 25.9,20.3 24.9,21.6 24.0,24.4 23.0,21.7 22.1,25.1 21.1,28.9 20.1,24.6 19.2,24.6 18.2,25.9 17.3,20.4 16.3,20.8 15.4,25.2 14.4,22.9 13.4,24.9 12.5,29.2 11.5,24.9 10.6,23.2 9.6,25.3 8.7,20.8 7.7,20.3 6.7,25.7 5.8,24.4 4.8,24.6 3.9,29.0 2.9,25.2 2.0,21.9 1.0,24.6" fill="#5a9e5e"/></svg>
<svg style="left:306.00px;top:523.30px;" width="57.5" height="32" viewBox="0 0 57.5 32"><rect x="0.6" y="0.6" width="56.3" height="30.8" rx="3" fill="#2d2d32" stroke="#17171a" stroke-width="1.2"/><polygon points="1.0,14.9 2.0,14.5 2.9,11.2 3.9,7.1 4.8,8.3 5.8,9.8 6.7,8.0 7.7,8.3 8.7,7.9 9.6,5.9 10.6,8.5 11.5,11.6 12.5,7.5 13.4,4.2 14.4,8.7 15.4,11.3 16.3,7.6 17.3,6.4 18.2,8.2 19.2,7.7 20.1,8.3 21.1,10.3 22.1,7.5 23.0,4.6 24.0,8.9 24.9,11.9 25.9,7.2 26.8,5.0 27.8,8.7 28.8,9.6 29.7,7.9 30.7,8.5 31.6,7.7 32.6,5.8 33.5,8.9 34.5,11.6 35.4,6.9 36.4,4.3 37.4,9.2 38.3,11.1 39.3,7.3 40.2,6.6 41.2,8.3 42.1,7.6 43.1,8.6 44.1,10.4 45.0,7.0 46.0,4.6 46.9,9.5 47.9,11.7 48.8,6.7 49.8,5.2 50.8,9.0 51.7,9.4 52.7,7.9 53.6,10.1 54.6,11.0 55.5,12.3 56.5,15.0 56.5,17.0 55.5,19.7 54.6,21.0 53.6,21.9 52.7,24.1 51.7,22.6 50.8,23.0 49.8,26.8 48.8,25.3 47.9,20.3 46.9,22.5 46.0,27.4 45.0,25.0 44.1,21.6 43.1,23.4 42.1,24.4 41.2,23.7 40.2,25.4 39.3,24.7 38.3,20.9 37.4,22.8 36.4,27.7 35.4,25.1 34.5,20.4 33.5,23.1 32.6,26.2 31.6,24.3 30.7,23.5 29.7,24.1 28.8,22.4 27.8,23.3 26.8,27.0 25.9,24.8 24.9,20.1 24.0,23.1 23.0,27.4 22.1,24.5 21.1,21.7 20.1,23.7 19.2,24.3 18.2,23.8 17.3,25.6 16.3,24.4 15.4,20.7 14.4,23.3 13.4,27.8 12.5,24.5 11.5,20.4 10.6,23.5 9.6,26.1 8.7,24.1 7.7,23.7 6.7,24.0 5.8,22.2 4.8,23.7 3.9,24.9 2.9,20.8 2.0,17.5 1.0,17.1" fill="#5a9e5e"/></svg>
<svg style="left:218.75px;top:581.40px;" width="57.5" height="32" viewBox="0 0 57.5 32"><rect x="0.6" y="0.6" width="56.3" height="30.8" rx="3" fill="#2d2d32" stroke="#17171a" stroke-width="1.2"/><polygon points="1.0,2.8 2.0,2.8 2.9,2.8 3.9,2.8 4.8,2.8 5.8,2.8 6.7,2.8 7.7,2.8 8.7,2.8 9.6,2.8 10.6,2.8 11.5,2.8 12.5,2.8 13.4,2.8 14.4,2.8 15.4,2.8 16.3,2.8 17.3,2.8 18.2,2.8 19.2,2.8 20.1,2.8 21.1,2.8 22.1,2.8 23.0,2.8 24.0,2.8 24.9,5.7 25.9,5.7 26.8,5.7 27.8,5.7 28.8,5.7 29.7,5.7 30.7,5.7 31.6,5.7 32.6,5.7 33.5,5.7 34.5,5.7 35.4,3.5 36.4,3.5 37.4,3.5 38.3,3.5 39.3,3.5 40.2,3.5 41.2,3.5 42.1,3.5 43.1,3.5 44.1,3.5 45.0,3.5 46.0,3.5 46.9,3.5 47.9,3.5 48.8,3.5 49.8,3.5 50.8,3.5 51.7,3.5 52.7,3.5 53.6,3.5 54.6,3.5 55.5,3.5 56.5,3.5 56.5,28.5 55.5,28.5 54.6,28.5 53.6,28.5 52.7,28.5 51.7,28.5 50.8,28.5 49.8,28.5 48.8,28.5 47.9,28.5 46.9,28.5 46.0,28.5 45.0,28.5 44.1,28.5 43.1,28.5 42.1,28.5 41.2,28.5 40.2,28.5 39.3,28.5 38.3,28.5 37.4,28.5 36.4,28.5 35.4,28.5 34.5,26.3 33.5,26.3 32.6,26.3 31.6,26.3 30.7,26.3 29.7,26.3 28.8,26.3 27.8,26.3 26.8,26.3 25.9,26.3 24.9,26.3 24.0,29.2 23.0,29.2 22.1,29.2 21.1,29.2 20.1,29.2 19.2,29.2 18.2,29.2 17.3,29.2 16.3,29.2 15.4,29.2 14.4,29.2 13.4,29.2 12.5,29.2 11.5,29.2 10.6,29.2 9.6,29.2 8.7,29.2 7.7,29.2 6.7,29.2 5.8,29.2 4.8,29.2 3.9,29.2 2.9,29.2 2.0,29.2 1.0,29.2" fill="#b9ac74"/><polygon points="1.0,5.4 2.0,5.4 2.9,5.4 3.9,5.4 4.8,5.4 5.8,5.4 6.7,5.4 7.7,5.4 8.7,5.4 9.6,5.4 10.6,5.4 11.5,5.4 12.5,5.4 13.4,5.4 14.4,5.4 15.4,5.4 16.3,5.4 17.3,5.4 18.2,5.4 19.2,5.4 20.1,5.4 21.1,5.8 22.1,6.3 23.0,6.8 24.0,7.2 24.9,7.7 25.9,8.2 26.8,8.7 27.8,9.2 28.8,9.7 29.7,9.7 30.7,9.7 31.6,9.7 32.6,9.7 33.5,9.7 34.5,9.7 35.4,6.8 36.4,6.8 37.4,6.8 38.3,6.8 39.3,6.8 40.2,6.8 41.2,6.8 42.1,6.8 43.1,6.8 44.1,6.8 45.0,6.8 46.0,6.8 46.9,6.8 47.9,6.8 48.8,6.8 49.8,6.8 50.8,6.8 51.7,6.8 52.7,6.8 53.6,6.8 54.6,6.8 55.5,6.8 56.5,6.8 56.5,25.2 55.5,25.2 54.6,25.2 53.6,25.2 52.7,25.2 51.7,25.2 50.8,25.2 49.8,25.2 48.8,25.2 47.9,25.2 46.9,25.2 46.0,25.2 45.0,25.2 44.1,25.2 43.1,25.2 42.1,25.2 41.2,25.2 40.2,25.2 39.3,25.2 38.3,25.2 37.4,25.2 36.4,25.2 35.4,25.2 34.5,22.3 33.5,22.3 32.6,22.3 31.6,22.3 30.7,22.3 29.7,22.3 28.8,22.3 27.8,22.8 26.8,23.3 25.9,23.8 24.9,24.3 24.0,24.8 23.0,25.2 22.1,25.7 21.1,26.2 20.1,26.6 19.2,26.6 18.2,26.6 17.3,26.6 16.3,26.6 15.4,26.6 14.4,26.6 13.4,26.6 12.5,26.6 11.5,26.6 10.6,26.6 9.6,26.6 8.7,26.6 7.7,26.6 6.7,26.6 5.8,26.6 4.8,26.6 3.9,26.6 2.9,26.6 2.0,26.6 1.0,26.6" fill="#5a9e5e"/><rect x="36.0" y="2" width="1.1" height="28" fill="#2d2d32" opacity="0.75"/><rect x="39.1" y="2" width="1.1" height="28" fill="#2d2d32" opacity="0.75"/><rect x="42.2" y="2" width="1.1" height="28" fill="#2d2d32" opacity="0.75"/><rect x="45.3" y="2" width="1.1" height="28" fill="#2d2d32" opacity="0.75"/><rect x="48.4" y="2" width="1.1" height="28" fill="#2d2d32" opacity="0.75"/><rect x="51.5" y="2" width="1.1" height="28" fill="#2d2d32" opacity="0.75"/></svg>
<svg style="left:306.00px;top:581.40px;" width="57.5" height="32" viewBox="0 0 57.5 32"><rect x="0.6" y="0.6" width="56.3" height="30.8" rx="3" fill="#2d2d32" stroke="#17171a" stroke-width="1.2"/><polygon points="1.0,2.8 2.0,2.8 2.9,2.8 3.9,2.8 4.8,2.8 5.8,2.8 6.7,2.8 7.7,2.8 8.7,2.8 9.6,2.8 10.6,2.8 11.5,2.8 12.5,2.8 13.4,2.8 14.4,2.8 15.4,2.8 16.3,2.8 17.3,2.8 18.2,2.8 19.2,2.8 20.1,2.8 21.1,2.8 22.1,2.8 23.0,2.8 24.0,2.8 24.9,2.8 25.9,2.8 26.8,2.8 27.8,2.8 28.8,2.8 29.7,2.8 30.7,2.8 31.6,2.8 32.6,2.8 33.5,2.8 34.5,2.8 35.4,2.8 36.4,2.8 37.4,2.8 38.3,2.8 39.3,2.8 40.2,2.8 41.2,2.8 42.1,2.8 43.1,2.8 44.1,2.8 45.0,2.8 46.0,2.8 46.9,2.8 47.9,2.8 48.8,2.8 49.8,2.8 50.8,2.8 51.7,2.8 52.7,2.8 53.6,2.8 54.6,2.8 55.5,2.8 56.5,2.8 56.5,29.2 55.5,29.2 54.6,29.2 53.6,29.2 52.7,29.2 51.7,29.2 50.8,29.2 49.8,29.2 48.8,29.2 47.9,29.2 46.9,29.2 46.0,29.2 45.0,29.2 44.1,29.2 43.1,29.2 42.1,29.2 41.2,29.2 40.2,29.2 39.3,29.2 38.3,29.2 37.4,29.2 36.4,29.2 35.4,29.2 34.5,29.2 33.5,29.2 32.6,29.2 31.6,29.2 30.7,29.2 29.7,29.2 28.8,29.2 27.8,29.2 26.8,29.2 25.9,29.2 24.9,29.2 24.0,29.2 23.0,29.2 22.1,29.2 21.1,29.2 20.1,29.2 19.2,29.2 18.2,29.2 17.3,29.2 16.3,29.2 15.4,29.2 14.4,29.2 13.4,29.2 12.5,29.2 11.5,29.2 10.6,29.2 9.6,29.2 8.7,29.2 7.7,29.2 6.7,29.2 5.8,29.2 4.8,29.2 3.9,29.2 2.9,29.2 2.0,29.2 1.0,29.2" fill="#b9ac74"/><polygon points="1.0,6.5 2.0,6.5 2.9,6.5 3.9,6.5 4.8,6.5 5.8,6.5 6.7,6.5 7.7,6.5 8.7,6.5 9.6,6.5 10.6,6.5 11.5,6.5 12.5,6.5 13.4,6.5 14.4,6.5 15.4,6.5 16.3,6.5 17.3,6.5 18.2,6.5 19.2,6.5 20.1,6.5 21.1,6.5 22.1,6.5 23.0,6.5 24.0,6.5 24.9,6.5 25.9,6.5 26.8,6.5 27.8,6.5 28.8,6.5 29.7,6.5 30.7,6.5 31.6,6.5 32.6,6.5 33.5,6.5 34.5,6.5 35.4,6.5 36.4,6.5 37.4,6.5 38.3,6.5 39.3,6.5 40.2,6.5 41.2,6.5 42.1,6.5 43.1,6.5 44.1,6.5 45.0,6.5 46.0,6.5 46.9,6.5 47.9,6.5 48.8,6.5 49.8,6.5 50.8,6.5 51.7,6.5 52.7,6.5 53.6,6.5 54.6,6.5 55.5,6.5 56.5,6.5 56.5,25.5 55.5,25.5 54.6,25.5 53.6,25.5 52.7,25.5 51.7,25.5 50.8,25.5 49.8,25.5 48.8,25.5 47.9,25.5 46.9,25.5 46.0,25.5 45.0,25.5 44.1,25.5 43.1,25.5 42.1,25.5 41.2,25.5 40.2,25.5 39.3,25.5 38.3,25.5 37.4,25.5 36.4,25.5 35.4,25.5 34.5,25.5 33.5,25.5 32.6,25.5 31.6,25.5 30.7,25.5 29.7,25.5 28.8,25.5 27.8,25.5 26.8,25.5 25.9,25.5 24.9,25.5 24.0,25.5 23.0,25.5 22.1,25.5 21.1,25.5 20.1,25.5 19.2,25.5 18.2,25.5 17.3,25.5 16.3,25.5 15.4,25.5 14.4,25.5 13.4,25.5 12.5,25.5 11.5,25.5 10.6,25.5 9.6,25.5 8.7,25.5 7.7,25.5 6.7,25.5 5.8,25.5 4.8,25.5 3.9,25.5 2.9,25.5 2.0,25.5 1.0,25.5" fill="#5a9e5e"/><rect x="46.0" y="2" width="1" height="28" fill="#2d2d32" opacity="0.7"/><rect x="48.6" y="2" width="1" height="28" fill="#2d2d32" opacity="0.7"/><rect x="51.2" y="2" width="1" height="28" fill="#2d2d32" opacity="0.7"/><rect x="53.8" y="2" width="1" height="28" fill="#2d2d32" opacity="0.7"/></svg>
<svg style="left:218.75px;top:639.30px;" width="57.5" height="32" viewBox="0 0 57.5 32"><rect x="0.6" y="0.6" width="56.3" height="30.8" rx="3" fill="#2a3a30" stroke="#f4f4f4" stroke-width="1.6"/><polygon points="1.0,12.7 2.0,9.6 2.9,7.7 3.9,8.1 4.8,10.7 5.8,11.0 6.7,7.9 7.7,6.8 8.7,8.5 9.6,12.2 10.6,9.0 11.5,6.4 12.5,6.6 13.4,9.7 14.4,11.1 15.4,7.1 16.3,5.5 17.3,7.3 18.2,11.6 19.2,8.9 20.1,5.6 21.1,5.5 22.1,8.8 23.0,11.5 24.0,6.9 24.9,4.9 25.9,6.4 26.8,10.9 27.8,9.2 28.8,5.5 29.7,5.1 30.7,8.2 31.6,12.1 32.6,7.3 33.5,4.9 34.5,6.2 35.4,10.4 36.4,9.8 37.4,6.1 38.3,5.4 39.3,8.0 40.2,12.7 41.2,8.1 42.1,5.8 43.1,6.6 44.1,10.2 45.0,10.7 46.0,7.2 46.9,6.4 47.9,15.3 48.8,15.3 49.8,15.3 50.8,15.3 51.7,8.7 52.7,8.7 53.6,8.7 54.6,8.7 55.5,8.7 56.5,8.7 56.5,23.3 55.5,23.3 54.6,23.3 53.6,23.3 52.7,23.3 51.7,23.3 50.8,16.7 49.8,16.7 48.8,16.7 47.9,16.7 46.9,25.6 46.0,24.8 45.0,21.3 44.1,21.8 43.1,25.4 42.1,26.2 41.2,23.9 40.2,19.3 39.3,24.0 38.3,26.6 37.4,25.9 36.4,22.2 35.4,21.6 34.5,25.8 33.5,27.1 32.6,24.7 31.6,19.9 30.7,23.8 29.7,26.9 28.8,26.5 27.8,22.8 26.8,21.1 25.9,25.6 24.9,27.1 24.0,25.1 23.0,20.5 22.1,23.2 21.1,26.5 20.1,26.4 19.2,23.1 18.2,20.4 17.3,24.7 16.3,26.5 15.4,24.9 14.4,20.9 13.4,22.3 12.5,25.4 11.5,25.6 10.6,23.0 9.6,19.8 8.7,23.5 7.7,25.2 6.7,24.1 5.8,21.0 4.8,21.3 3.9,23.9 2.9,24.3 2.0,22.4 1.0,19.3" fill="#5a9e5e"/></svg>
<svg style="left:306.00px;top:639.30px;" width="57.5" height="32" viewBox="0 0 57.5 32"><clipPath id="tc17"><rect width="57.5" height="32" rx="3"/></clipPath><g clip-path="url(#tc17)"><rect width="57.5" height="32" fill="#050506"/><defs><linearGradient id="gl1" x1="0" x2="1"><stop offset="0" stop-color="#2b3fa0"/><stop offset="0.13" stop-color="#e8f0ff"/><stop offset="0.22" stop-color="#5a78d8"/><stop offset="0.4" stop-color="#4a4a9a"/><stop offset="0.62" stop-color="#3a2f55"/><stop offset="0.85" stop-color="#241a18"/><stop offset="1" stop-color="#0a0808"/></linearGradient></defs><rect x="0" y="3.0" width="57.5" height="3.2" fill="url(#gl1)"/><rect x="0" y="8.2" width="57.5" height="3.2" fill="url(#gl1)"/><rect x="0" y="13.4" width="57.5" height="3.2" fill="url(#gl1)"/><rect x="0" y="18.6" width="57.5" height="3.2" fill="url(#gl1)"/><rect x="0" y="23.8" width="57.5" height="3.2" fill="url(#gl1)"/><rect x="0" y="29.0" width="57.5" height="3.2" fill="url(#gl1)"/></g></svg>
<svg style="left:218.75px;top:697.50px;" width="57.5" height="32" viewBox="0 0 57.5 32"><clipPath id="tc08"><rect width="57.5" height="32" rx="3"/></clipPath><g clip-path="url(#tc08)"><rect width="57.5" height="32" fill="#050506"/><rect width="57.5" height="32" fill="#0c1c24"/><rect x="0" y="3.0" width="57.5" height="2.6" fill="#27525e" opacity="0.8"/><rect x="0" y="8.4" width="57.5" height="2.6" fill="#27525e" opacity="0.8"/><rect x="0" y="13.8" width="57.5" height="2.6" fill="#27525e" opacity="0.8"/><rect x="0" y="19.2" width="57.5" height="2.6" fill="#27525e" opacity="0.8"/><rect x="0" y="24.6" width="57.5" height="2.6" fill="#27525e" opacity="0.8"/><rect x="0" y="30.0" width="57.5" height="2.6" fill="#27525e" opacity="0.8"/><path d="M45.0 5.5h15l3 -3.2h-15z" fill="#dffcff"/><path d="M38.8 10.9h15l3 -3.2h-15z" fill="#dffcff"/><path d="M32.6 16.3h15l3 -3.2h-15z" fill="#dffcff"/><path d="M26.4 21.7h15l3 -3.2h-15z" fill="#dffcff"/><path d="M20.2 27.1h15l3 -3.2h-15z" fill="#dffcff"/><path d="M14.0 32.5h15l3 -3.2h-15z" fill="#dffcff"/></g></svg>
<svg style="left:306.00px;top:697.50px;" width="57.5" height="32" viewBox="0 0 57.5 32"><rect x="0.8" y="0.8" width="55.9" height="30.4" rx="3" fill="#25252a" stroke="#e0483c" stroke-width="1.6"/><rect x="2" y="8" width="53.5" height="14" fill="#5a9e5e"/><rect x="2" y="22" width="53.5" height="3" fill="#3a4a3c"/><rect x="4" y="26" width="2.5" height="1" fill="#d04a3c"/></svg>
<svg style="left:218.75px;top:755.70px;" width="57.5" height="32" viewBox="0 0 57.5 32"><clipPath id="tc09"><rect width="57.5" height="32" rx="3"/></clipPath><g clip-path="url(#tc09)"><rect width="57.5" height="32" fill="#050506"/><rect x="20" y="0" width="17" height="32" fill="#8e9193"/><rect x="27" y="3" width="3" height="24" fill="#55585b"/><rect x="32" y="5" width="3" height="22" fill="#6a6d70"/><rect x="22" y="9" width="3" height="15" fill="#b9bcbe"/><path d="M0 0H15L0 15Z" fill="#e2483c"/><rect x="5.5" y="18" width="11.5" height="8" rx="1" fill="none" stroke="#f2f2f2" stroke-width="1.3"/><path d="M9.3 18v5M13.2 18v5M5.5 23.5h11.5" stroke="#f2f2f2" stroke-width="1.2"/></g></svg>
<svg style="left:306.00px;top:755.70px;" width="57.5" height="32" viewBox="0 0 57.5 32"><rect x="0.6" y="0.6" width="56.3" height="30.8" rx="3" fill="#2d2d32" stroke="#17171a" stroke-width="1.2"/><rect x="1.2" y="14" width="55" height="3.6" fill="#5a9e5e"/></svg>
<span style="left:221.75px;top:267.44px;font-size:9.6px;line-height:11.52px;color:#85858a;font-weight:400;letter-spacing:0.000px;letter-spacing:-0.470px;">cycles-F1-1...</span>
<span style="left:309.00px;top:267.44px;font-size:9.6px;line-height:11.52px;color:#85858a;font-weight:400;letter-spacing:0.000px;letter-spacing:-0.470px;">cycles-F2-1...</span>
<span style="left:221.75px;top:325.44px;font-size:9.6px;line-height:11.52px;color:#85858a;font-weight:400;letter-spacing:0.000px;letter-spacing:-0.470px;">cycles-F3-1...</span>
<span style="left:309.00px;top:325.44px;font-size:9.6px;line-height:11.52px;color:#85858a;font-weight:400;letter-spacing:0.000px;letter-spacing:-0.470px;">cycles-F4-1...</span>
<span style="left:221.75px;top:383.54px;font-size:9.6px;line-height:11.52px;color:#85858a;font-weight:400;letter-spacing:0.000px;letter-spacing:-0.470px;">cycles-F5-1...</span>
<span style="left:309.00px;top:383.54px;font-size:9.6px;line-height:11.52px;color:#85858a;font-weight:400;letter-spacing:0.000px;letter-spacing:-0.470px;">cycles-F6-1...</span>
<span style="left:220.00px;top:441.44px;font-size:9.6px;line-height:11.52px;color:#85858a;font-weight:400;letter-spacing:0.000px;letter-spacing:-0.111px;">Distortion 3...</span>
<span style="left:307.25px;top:441.44px;font-size:9.6px;line-height:11.52px;color:#85858a;font-weight:400;letter-spacing:0.000px;letter-spacing:-0.111px;">Distortion 5...</span>
<span style="left:222.50px;top:500.44px;font-size:9.6px;line-height:11.52px;color:#85858a;font-weight:400;letter-spacing:0.000px;letter-spacing:-0.094px;">Distortion ...</span>
<span style="left:309.75px;top:500.44px;font-size:9.6px;line-height:11.52px;color:#85858a;font-weight:400;letter-spacing:0.000px;letter-spacing:-0.094px;">Distortion ...</span>
<span style="left:222.50px;top:558.74px;font-size:9.6px;line-height:11.52px;color:#85858a;font-weight:400;letter-spacing:0.000px;letter-spacing:-0.094px;">Distortion ...</span>
<span style="left:309.75px;top:558.74px;font-size:9.6px;line-height:11.52px;color:#85858a;font-weight:400;letter-spacing:0.000px;letter-spacing:-0.094px;">Distortion ...</span>
<span style="left:220.00px;top:616.54px;font-size:9.6px;line-height:11.52px;color:#85858a;font-weight:400;letter-spacing:0.000px;letter-spacing:-0.340px;">Glitch Fade....</span>
<span style="left:308.25px;top:616.54px;font-size:9.6px;line-height:11.52px;color:#85858a;font-weight:400;letter-spacing:0.000px;letter-spacing:-0.253px;">Glitch Hiss....</span>
<span style="left:219.50px;top:674.84px;font-size:9.6px;line-height:11.52px;color:#f4f4f4;font-weight:400;letter-spacing:0.000px;letter-spacing:-0.214px;">Glitch Static...</span>
<span style="left:306.75px;top:674.84px;font-size:9.6px;line-height:11.52px;color:#85858a;font-weight:400;letter-spacing:0.000px;letter-spacing:-0.248px;">Glitch_01.m...</span>
<span style="left:219.50px;top:733.04px;font-size:9.6px;line-height:11.52px;color:#85858a;font-weight:400;letter-spacing:0.000px;letter-spacing:-0.248px;">Glitch_05.m...</span>
<span style="left:306.75px;top:733.04px;font-size:9.6px;line-height:11.52px;color:#f4f4f4;font-weight:400;letter-spacing:0.000px;letter-spacing:-0.084px;">sleep-water...</span>
<span style="left:226.50px;top:791.04px;font-size:9.6px;line-height:11.52px;color:#85858a;font-weight:400;letter-spacing:0.000px;letter-spacing:-0.214px;">Timeline 1</span>
<span style="left:307.75px;top:791.04px;font-size:9.6px;line-height:11.52px;color:#85858a;font-weight:400;letter-spacing:0.000px;letter-spacing:-0.390px;">TV Static.wav</span>
<div style="left:394.00px;top:196.50px;width:714.00px;height:2.50px;background:#151518;"></div>
<div style="left:402.00px;top:198.50px;width:697.00px;height:391.50px;background:#000;"></div>
<div style="left:1098.70px;top:197.00px;width:9.30px;height:393.00px;background:#19191c;"></div>
<div style="left:1107.00px;top:590.00px;width:1.20px;height:51.00px;background:#19191c;"></div>
<svg style="left:641.00px;top:198.50px;" width="220" height="391" viewBox="0 0 220 391">
<defs>
<linearGradient id="sky" x1="0" y1="0" x2="0" y2="1"><stop offset="0" stop-color="#a2b4d9"/><stop offset="0.45" stop-color="#b3bfda"/><stop offset="0.8" stop-color="#c6cad8"/><stop offset="1" stop-color="#cdced8"/></linearGradient>
<linearGradient id="wat" x1="0" y1="0" x2="0" y2="1"><stop offset="0" stop-color="#adbdd5"/><stop offset="0.14" stop-color="#93a8c9"/><stop offset="0.45" stop-color="#7d96c0"/><stop offset="1" stop-color="#6f8ab8"/></linearGradient>
<linearGradient id="walk" x1="0" y1="0" x2="1" y2="0"><stop offset="0" stop-color="#e3edf5"/><stop offset="0.3" stop-color="#dde9f2"/><stop offset="0.75" stop-color="#dbe7f1"/><stop offset="1" stop-color="#e1ebf4"/></linearGradient>
<linearGradient id="cyl" x1="0" y1="0" x2="0" y2="1"><stop offset="0" stop-color="#e6eef5"/><stop offset="1" stop-color="#d5e2ed"/></linearGradient>
<linearGradient id="blobg" x1="0.2" y1="0" x2="0.7" y2="1"><stop offset="0" stop-color="#fcf9e6"/><stop offset="0.5" stop-color="#f7f0d0"/><stop offset="1" stop-color="#e6d898"/></linearGradient>
<filter id="b6" x="-30%" y="-30%" width="160%" height="160%"><feGaussianBlur stdDeviation="6"/></filter>
<filter id="b3" x="-30%" y="-30%" width="160%" height="160%"><feGaussianBlur stdDeviation="3"/></filter>
<filter id="b2" x="-30%" y="-30%" width="160%" height="160%"><feGaussianBlur stdDeviation="1.800"/></filter>
<filter id="b1" x="-20%" y="-20%" width="140%" height="140%"><feGaussianBlur stdDeviation="0.800"/></filter>
<filter id="rough" x="-10%" y="-10%" width="120%" height="120%"><feTurbulence type="fractalNoise" baseFrequency="0.110" numOctaves="3" seed="4" result="n"/><feDisplacementMap in="SourceGraphic" in2="n" scale="9" xChannelSelector="R" yChannelSelector="G"/></filter>
<filter id="rough2" x="-10%" y="-10%" width="120%" height="120%"><feTurbulence type="fractalNoise" baseFrequency="0.050" numOctaves="2" seed="9" result="n"/><feDisplacementMap in="SourceGraphic" in2="n" scale="7" xChannelSelector="R" yChannelSelector="G"/><feGaussianBlur stdDeviation="0.700"/></filter>
<filter id="tex" x="0" y="0" width="100%" height="100%"><feTurbulence type="fractalNoise" baseFrequency="0.180 0.090" numOctaves="3" seed="11"/><feColorMatrix type="matrix" values="0 0 0 0 0.620  0 0 0 0 0.560  0 0 0 0 0.220  1.900 0 0 0 -0.800"/><feComposite in2="SourceGraphic" operator="in"/></filter>
<filter id="texw" x="0" y="0" width="100%" height="100%"><feTurbulence type="fractalNoise" baseFrequency="0.160" numOctaves="3" seed="23"/><feColorMatrix type="matrix" values="0 0 0 0 1  0 0 0 0 0.990  0 0 0 0 0.930  0 2.200 0 0 -0.950"/><feComposite in2="SourceGraphic" operator="in"/></filter>
<clipPath id="vc"><rect width="220" height="391"/></clipPath>
<clipPath id="bc"><polygon points="67.5,3.7 80.0,4.7 90.4,7.8 102.8,16.0 115.3,30.6 132.0,29.6 148.5,41.0 179.7,42.0 198.4,50.4 203.6,59.7 194.2,71.0 177.6,82.6 171.4,97.0 165.1,120.0 163.0,140.7 173.5,157.3 171.4,169.8 156.8,178.0 144.4,169.8 132.0,161.5 115.3,153.2 92.5,144.9 67.5,142.8 40.5,140.7 21.8,132.4 17.7,122.0 21.8,109.6 36.4,103.3 55.0,97.1 53.0,80.5 51.0,68.0 54.0,47.3 63.4,36.9 61.3,20.3 63.4,9.9"/></clipPath>
</defs>
<g clip-path="url(#vc)">
<rect width="220" height="187" fill="url(#sky)"/>
<g filter="url(#b3)" fill="#e6e4e8">
<ellipse cx="170" cy="27" rx="36" ry="15"/><ellipse cx="150" cy="20" rx="16" ry="9"/><ellipse cx="190" cy="38" rx="20" ry="10"/>
<ellipse cx="24" cy="72" rx="22" ry="17"/><ellipse cx="36" cy="88" rx="18" ry="14"/><ellipse cx="8" cy="100" rx="16" ry="22"/>
<ellipse cx="192" cy="92" rx="22" ry="18"/><ellipse cx="204" cy="72" rx="12" ry="9"/>
<ellipse cx="40" cy="4" rx="36" ry="5" opacity="0.700"/>
</g>
<g filter="url(#b6)" fill="#d8d7de"><ellipse cx="30" cy="150" rx="50" ry="22" opacity="0.700"/><ellipse cx="196" cy="140" rx="40" ry="24" opacity="0.700"/><ellipse cx="110" cy="172" rx="120" ry="10" opacity="0.600"/></g>
<rect y="184" width="220" height="207" fill="url(#wat)"/>
<g filter="url(#b6)"><ellipse cx="10" cy="205" rx="46" ry="10" fill="#b7c7dc" opacity="0.800"/><ellipse cx="212" cy="205" rx="40" ry="9" fill="#b2c3da" opacity="0.700"/><ellipse cx="4" cy="340" rx="16" ry="60" fill="#5f7fb3" opacity="0.550"/><ellipse cx="216" cy="330" rx="14" ry="66" fill="#6283b7" opacity="0.500"/><ellipse cx="30" cy="290" rx="22" ry="26" fill="#7f9ac6" opacity="0.600"/></g>
<g filter="url(#rough2)"><path d="M34 236l12 -3l14 2l6 10l-4 10l6 8l-4 9l-12 2l-6 -6l-8 -1l-2 -10l4 -8z" fill="#d3d4a0" opacity="0.800"/><path d="M46 262l14 -2l4 8l-14 4z" fill="#e6e3b4" opacity="0.800"/>
<path d="M152 226l20 2l14 10l8 16l6 18l-2 22l6 20l-8 14l-8 -10l-4 -22l-10 -18l-8 -20l-6 -16z" fill="#9fac8c" opacity="0.380"/><path d="M186 240l8 14l2 16l-8 -6z" fill="#d9d7a0" opacity="0.700"/><path d="M190 296l8 8l2 20l-8 -6z" fill="#c9c98e" opacity="0.600"/>
<path d="M33 324l30 -4l8 5l-28 7z" fill="#c9d1b4" opacity="0.700"/></g>
<path d="M-1 226L84 213L84 221L-1 239Z" fill="#c9d9e9" opacity="0.900"/>
<path d="M-1 226L84 213L84 215.500L-1 230Z" fill="#e0eaf3" opacity="0.900"/>
<path d="M221 228L144 214L144 220L221 238Z" fill="#c6d6e7" opacity="0.800"/>
<path d="M23 184V205.500A90 7 0 0 0 203 205.500V184Z" fill="url(#cyl)"/>
<ellipse cx="113" cy="184.500" rx="90" ry="5" fill="#eef4f9"/>
<ellipse cx="120" cy="185.200" rx="58" ry="3" fill="#babdca"/>
<path d="M84.500 212H144L220 391H10Z" fill="url(#walk)" filter="url(#b1)"/>
<path d="M84.500 212L10 391H34L92 212Z" fill="#e3edf5" opacity="0.800"/>
<path d="M144 212L220 391H196L137 212Z" fill="#e1ebf4" opacity="0.700"/>
<g filter="url(#b1)" stroke="#cddbe8" fill="none" opacity="0.700"><path d="M100 214L62 391" stroke-width="1.500"/><path d="M112 214L100 391" stroke-width="1"/><path d="M124 214L140 391" stroke-width="1"/><path d="M134 214L178 391" stroke-width="1.500"/></g>
<ellipse cx="114" cy="210" rx="34" ry="5" fill="#dfe9f2" filter="url(#b2)"/>

<g filter="url(#rough)">
<polygon points="67.5,3.7 80.0,4.7 90.4,7.8 102.8,16.0 115.3,30.6 132.0,29.6 148.5,41.0 179.7,42.0 198.4,50.4 203.6,59.7 194.2,71.0 177.6,82.6 171.4,97.0 165.1,120.0 163.0,140.7 173.5,157.3 171.4,169.8 156.8,178.0 144.4,169.8 132.0,161.5 115.3,153.2 92.5,144.9 67.5,142.8 40.5,140.7 21.8,132.4 17.7,122.0 21.8,109.6 36.4,103.3 55.0,97.1 53.0,80.5 51.0,68.0 54.0,47.3 63.4,36.9 61.3,20.3 63.4,9.9" fill="url(#blobg)"/>
<g clip-path="url(#bc)">
<g filter="url(#b2)">
<path d="M55 50L92 30L96 70L80 98L55 97Z" fill="#d3c16c" opacity="0.850"/>
<path d="M56 98L100 92L135 120L165 140L172 168L156 178L120 155L66 143Z" fill="#dccb80" opacity="0.800"/>
<path d="M18 108L56 97L64 120L56 141L22 133Z" fill="#fffdf2"/>
<path d="M92 70L126 62L160 84L150 120L110 112Z" fill="#f7f1d2" opacity="0.900"/>
<path d="M116 32L150 42L200 52L194 72L150 80L120 62Z" fill="#faf6e0" opacity="0.950"/>
<path d="M63 5L92 8L112 30L96 46L66 38Z" fill="#f5efcc" opacity="0.900"/>
<path d="M96 46L112 30L122 60L100 70Z" fill="#e9d9a0" opacity="0.900"/>
<path d="M150 84L176 82L166 120L164 142L150 120Z" fill="#e6d898" opacity="0.900"/>
<path d="M140 150L166 146L172 168L156 178Z" fill="#bfa94e" opacity="0.900"/>
<path d="M92 100l14 4l-2 14l-12 -4zM120 84l12 2l2 10l-12 -2zM70 76l8 2l-2 14l-6 -2zM184 58l10 2l-4 8z" fill="#a7a57c" opacity="0.400"/>
</g>
<g filter="url(#b1)" fill="none" stroke-linecap="round"><path d="M66 12L62 44M72 10L70 48M80 12L82 40M88 16L94 44" stroke="#e6dba6" stroke-width="1.600" opacity="0.800"/><path d="M60 58L58 92M68 60L66 94M76 62L78 92" stroke="#bca84e" stroke-width="1.800" opacity="0.700"/><path d="M120 40L150 52L190 56M126 50L160 64L196 66" stroke="#ffffff" stroke-width="2" opacity="0.600"/><path d="M100 120L130 140L160 165M90 128L124 150L150 172" stroke="#c5b15a" stroke-width="1.800" opacity="0.600"/><path d="M26 112L52 104M24 122L54 116M30 132L56 128" stroke="#ffffff" stroke-width="2" opacity="0.700"/></g>
<rect width="220" height="190" filter="url(#tex)" opacity="0.280"/>
<rect width="220" height="190" filter="url(#texw)" opacity="0.900"/>
</g>
</g>
</g></svg>
<div style="left:395.00px;top:590.00px;width:712.00px;height:50.50px;background:#25252b;"></div>
<div style="left:408.50px;top:602.70px;width:682.00px;height:1.40px;background:#4e4e55;"></div>
<div style="left:981.00px;top:599.50px;width:3.20px;height:8.20px;background:#f2f2f2;"></div>
<svg style="left:412.00px;top:619.50px;" width="16" height="14" viewBox="0 0 16 14"><rect x="2.5" y="2.5" width="11.500" height="9" fill="none" stroke="#8b8b8e" stroke-width="1.2"/><circle cx="2.5" cy="2.5" r="1.3" fill="#8b8b8e"/><circle cx="14" cy="2.5" r="1.3" fill="#8b8b8e"/><circle cx="2.5" cy="11.5" r="1.3" fill="#8b8b8e"/><circle cx="14" cy="11.5" r="1.3" fill="#8b8b8e"/></svg>
<svg style="left:436.30px;top:623.30px;" width="9" height="6" viewBox="0 0 9 6"><path d="M1 1L4.5 5L8 1" fill="none" stroke="#8b8b8e" stroke-width="1.2"/></svg>
<svg style="left:525.00px;top:621.50px;" width="36" height="10" viewBox="0 0 36 10"><path d="M6 1.5L2.5 5L6 8.5M30 1.5L33.500 5L30 8.500" fill="none" stroke="#6a6a6f" stroke-width="1.1"/><circle cx="17.7" cy="5" r="3.500" fill="#8b8b8e"/></svg>
<svg style="left:655.00px;top:620.50px;" width="18" height="11" viewBox="0 0 18 11"><rect x="0.5" y="0.5" width="1.8" height="10" fill="#8b8b8e"/><path d="M9.5 0.5v10L2.500 5.500zM16.500 0.500v10L9.500 5.500z" fill="#8b8b8e"/></svg>
<svg style="left:686.00px;top:620.50px;" width="9" height="11" viewBox="0 0 9 11"><path d="M8.500 0.500v10L1 5.500z" fill="#8b8b8e"/></svg>
<div style="left:711.00px;top:621.00px;width:10.50px;height:10.50px;background:#8b8b8e;"></div>
<svg style="left:737.50px;top:620.50px;" width="9" height="11" viewBox="0 0 9 11"><path d="M0.500 0.500v10L8 5.500z" fill="#8b8b8e"/></svg>
<svg style="left:759.50px;top:620.50px;" width="18" height="11" viewBox="0 0 18 11"><rect x="15.700" y="0.500" width="1.800" height="10" fill="#8b8b8e"/><path d="M1.500 0.500v10L8.500 5.500zM8.500 0.500v10L15.500 5.500z" fill="#8b8b8e"/></svg>
<svg style="left:791.00px;top:619.50px;" width="17" height="13" viewBox="0 0 17 13"><path d="M5 3.500H12.500a3.500 3.500 0 0 1 0 7H4.500a3.500 3.500 0 0 1 -1.500 -6.600" fill="none" stroke="#8b8b8e" stroke-width="1.300"/><path d="M7.800 0.800L4.800 3.500L7.800 6.200" fill="none" stroke="#8b8b8e" stroke-width="1.300"/></svg>
<svg style="left:1012.00px;top:620.00px;" width="17" height="12" viewBox="0 0 17 12"><rect x="2.500" y="1.500" width="12" height="9" rx="1.500" fill="none" stroke="#8b8b8e" stroke-width="1.300"/><path d="M0 6l3 -2.200v4.400zM17 6l-3 -2.200v4.400z" fill="#8b8b8e"/></svg>
<svg style="left:1045.00px;top:620.50px;" width="11" height="11" viewBox="0 0 11 11"><path d="M0.500 0.500v10L7.500 5.500z" fill="#8b8b8e"/><rect x="8" y="0.500" width="2" height="10" fill="#8b8b8e"/></svg>
<svg style="left:1074.50px;top:620.50px;" width="11" height="11" viewBox="0 0 11 11"><path d="M10.500 0.500v10L3.500 5.500z" fill="#8b8b8e"/><rect x="1" y="0.500" width="2" height="10" fill="#8b8b8e"/></svg>
<div style="left:1108.00px;top:197.00px;width:338.00px;height:42.00px;background:#222228;"></div>
<div style="left:1108.00px;top:238.50px;width:338.00px;height:1.00px;background:#1c1c1f;"></div>
<span style="left:1132.44px;top:224.10px;font-size:9.5px;line-height:11.40px;color:#d2d2d4;font-weight:400;letter-spacing:0.000px;letter-spacing:0.000px;">Video</span>
<span style="left:1183.85px;top:224.10px;font-size:9.5px;line-height:11.40px;color:#45454c;font-weight:400;letter-spacing:0.000px;letter-spacing:0.000px;">Audio</span>
<span style="left:1233.57px;top:224.10px;font-size:9.5px;line-height:11.40px;color:#45454c;font-weight:400;letter-spacing:0.000px;letter-spacing:0.000px;">Effects</span>
<span style="left:1282.32px;top:224.10px;font-size:9.5px;line-height:11.40px;color:#45454c;font-weight:400;letter-spacing:0.000px;letter-spacing:0.000px;">Transition</span>
<span style="left:1344.80px;top:224.10px;font-size:9.5px;line-height:11.40px;color:#45454c;font-weight:400;letter-spacing:0.000px;letter-spacing:0.000px;">Image</span>
<span style="left:1401.85px;top:224.10px;font-size:9.5px;line-height:11.40px;color:#d2d2d4;font-weight:400;letter-spacing:0.000px;letter-spacing:0.000px;">File</span>
<svg style="left:1135.50px;top:205.50px;" width="18" height="13" viewBox="0 0 18 13"><rect x="0.600" y="0.600" width="16.800" height="11.800" rx="1" fill="none" stroke="#707075" stroke-width="1.100"/><path d="M3 2.200v8.600M15 2.200v8.600" stroke="#707075" stroke-width="1" stroke-dasharray="1.600 1.600"/></svg>
<svg style="left:1189.00px;top:205.00px;" width="14" height="14" viewBox="0 0 14 14"><path d="M4.500 11V3L11.500 1.500V9.500" fill="none" stroke="#45454c" stroke-width="1.300"/><ellipse cx="3" cy="11" rx="2" ry="1.600" fill="#45454c"/><ellipse cx="10" cy="9.600" rx="2" ry="1.600" fill="#45454c"/></svg>
<svg style="left:1240.00px;top:204.50px;" width="16" height="15" viewBox="0 0 16 15"><path d="M2 13.500L9 5.500" stroke="#45454c" stroke-width="2" stroke-linecap="round"/><path d="M11 1v3M9.500 2.500h3M13.500 6v2.400M12.300 7.200h2.400" stroke="#45454c" stroke-width="0.900"/></svg>
<svg style="left:1294.00px;top:206.00px;" width="18" height="12" viewBox="0 0 18 12"><rect x="0.600" y="0.600" width="16.800" height="10.800" fill="none" stroke="#45454c" stroke-width="1.100"/><path d="M3.500 2.500L9 6L3.500 9.500ZM14.500 2.500L9 6L14.500 9.500Z" fill="#45454c"/></svg>
<svg style="left:1349.00px;top:206.00px;" width="18" height="12" viewBox="0 0 18 12"><rect x="0.600" y="0.600" width="16.800" height="10.800" fill="none" stroke="#3f3f46" stroke-width="1.100"/><path d="M2.500 9.500L7 5.500L10 8L12.500 6.500L15.500 9.500Z" fill="#3f3f46"/></svg>
<svg style="left:1399.50px;top:205.00px;" width="20" height="14" viewBox="0 0 20 14"><path d="M1 2.500L8 1L8 9.500L1 8Z" fill="#5d5d62"/><path d="M5 4.500L14 3L14 11.500L5 10Z" fill="#707075" stroke="#222228" stroke-width="0.600"/><circle cx="15" cy="7.500" r="3.600" fill="#222228" stroke="#77777b" stroke-width="1.200"/></svg>
<span style="left:1170.00px;top:426.56px;font-size:23.4px;line-height:28.08px;color:#44444d;font-weight:400;letter-spacing:0.000px;letter-spacing:1.099px;">Nothing to inspect</span>
<div style="left:394.00px;top:640.50px;width:1052.00px;height:40.50px;background:#212127;"></div>
<div style="left:394.00px;top:640.30px;width:1052.00px;height:1.20px;background:#19191c;"></div>
<div style="left:394.00px;top:681.00px;width:1052.00px;height:1.00px;background:#1a1a1d;"></div>
<svg style="left:409.00px;top:654.30px;" width="21" height="14" viewBox="0 0 21 14"><rect x="0.500" y="0.500" width="20" height="3" fill="#5d5d62"/><rect x="0.500" y="4.500" width="8" height="4" fill="#8b8b8e"/><rect x="9.500" y="4.500" width="11" height="4" fill="#6a6a6f"/><rect x="0.500" y="9.500" width="12" height="4" fill="#6a6a6f"/><rect x="13.500" y="9.500" width="7" height="4" fill="#8b8b8e"/></svg>
<svg style="left:607.00px;top:653.00px;" width="11" height="16" viewBox="0 0 11 16"><path d="M1.500 1L1.500 12.500L4.500 9.800L6.800 15L8.800 14L6.600 9L10.300 8.800Z" fill="#e8503f"/></svg>
<svg style="left:633.50px;top:653.50px;" width="22" height="15" viewBox="0 0 22 15"><rect x="0.600" y="2.600" width="20.800" height="9.800" fill="none" stroke="#5d5d62" stroke-width="1.100"/><rect x="9.500" y="0.500" width="3" height="14" fill="#212127" stroke="#77777b" stroke-width="1.100"/><path d="M6.500 5L4 7.500L6.500 10M15.500 5L18 7.500L15.500 10" fill="none" stroke="#77777b" stroke-width="1.100"/></svg>
<svg style="left:667.50px;top:652.50px;" width="20" height="16" viewBox="0 0 20 16"><path d="M3.500 4.500H1V13.500H3.500M16.500 4.500H19V13.500H16.500" fill="none" stroke="#5d5d62" stroke-width="1.100"/><path d="M10 3.500V15.500" stroke="#77777b" stroke-width="1.200"/><circle cx="10" cy="2" r="1.500" fill="#77777b"/><path d="M7 6.500L4.800 9L7 11.500M13 6.500L15.200 9L13 11.500" fill="none" stroke="#77777b" stroke-width="1.100"/></svg>
<svg style="left:700.00px;top:654.50px;" width="19" height="12" viewBox="0 0 19 12"><rect x="0.500" y="0.500" width="18" height="2" fill="#8b8b8e"/><rect x="0.500" y="9.500" width="18" height="2" fill="#8b8b8e"/><rect x="1" y="3" width="17" height="6" fill="#a0a0a3"/><path d="M3 6h2.500M7 6h2.500M11 6h2.500M15 6h2" stroke="#212127" stroke-width="1.600"/></svg>
<div style="left:729.80px;top:650.00px;width:1.00px;height:22.00px;background:#2f2f35;"></div>
<svg style="left:739.00px;top:652.50px;" width="22" height="17" viewBox="0 0 22 17"><rect x="5.500" y="0.600" width="11" height="8" fill="none" stroke="#5d5d62" stroke-width="1.100"/><rect x="0.600" y="5" width="3.200" height="8" fill="none" stroke="#55555a" stroke-width="1"/><rect x="18.200" y="5" width="3.200" height="8" fill="none" stroke="#55555a" stroke-width="1"/><path d="M8.500 12.500L11 15L13.500 12.500" fill="none" stroke="#5d5d62" stroke-width="1.100"/></svg>
<svg style="left:772.50px;top:652.00px;" width="21" height="17" viewBox="0 0 21 17"><rect x="0.600" y="2.600" width="11" height="8" fill="none" stroke="#6a6a6f" stroke-width="1.100"/><rect x="10" y="8.500" width="8" height="6" fill="none" stroke="#55555a" stroke-width="1"/><path d="M14.500 1.500h3.500v4M16.500 4L18 5.800L19.500 4" fill="none" stroke="#5d5d62" stroke-width="1"/></svg>
<svg style="left:804.00px;top:652.00px;" width="22" height="17" viewBox="0 0 22 17"><rect x="0.600" y="5" width="9" height="10" fill="none" stroke="#6a6a6f" stroke-width="1.100"/><rect x="9.600" y="2" width="11" height="9" fill="none" stroke="#55555a" stroke-width="1.100"/><path d="M5 13V8.500M3 10.300L5 8.300L7 10.300M16.500 0.500V5.500M14.500 3.800L16.500 5.800L18.500 3.800" fill="none" stroke="#6a6a6f" stroke-width="1.100"/></svg>
<div style="left:835.80px;top:650.00px;width:1.00px;height:22.00px;background:#2f2f35;"></div>
<svg style="left:849.50px;top:652.50px;" width="16" height="16" viewBox="0 0 16 16"><g transform="rotate(45 8 8)"><path d="M4.200 2.500V8.200a3.800 3.800 0 0 0 7.600 0V2.500" fill="none" stroke="#f2f2f2" stroke-width="2.300"/><path d="M3 3.600h2.400M10.600 3.600h2.400" stroke="#212127" stroke-width="0.900"/></g></svg>
<svg style="left:880.50px;top:653.00px;" width="17" height="16" viewBox="0 0 17 16"><path d="M7 9.500a3 3 0 0 0 4.200 0l3 -3a3 3 0 0 0 -4.200 -4.200l-1.200 1.200M10 6.500a3 3 0 0 0 -4.200 0l-3 3a3 3 0 0 0 4.200 4.200l1.200 -1.200" fill="none" stroke="#f2f2f2" stroke-width="1.800" stroke-linecap="round"/></svg>
<svg style="left:914.00px;top:652.50px;" width="14" height="15" viewBox="0 0 14 15"><path d="M4 7V4.200a3 3 0 0 1 6 0V7" fill="none" stroke="#77777b" stroke-width="1.300"/><rect x="1.600" y="7" width="10.800" height="7" rx="1" fill="none" stroke="#77777b" stroke-width="1.300"/><path d="M5 10.500h4" stroke="#77777b" stroke-width="1.200"/></svg>
<div style="left:940.80px;top:650.00px;width:1.00px;height:22.00px;background:#2f2f35;"></div>
<svg style="left:952.50px;top:655.00px;" width="9" height="11" viewBox="0 0 9 11"><path d="M0.500 0.500H8.500V10.500L4.500 8L0.500 10.500Z" fill="#3f7fe0"/></svg>
<svg style="left:968.80px;top:658.20px;" width="9" height="6" viewBox="0 0 9 6"><path d="M1 1L4.5 5L8 1" fill="none" stroke="#77777b" stroke-width="1.2"/></svg>
<svg style="left:987.50px;top:655.00px;" width="9" height="10" viewBox="0 0 9 10"><path d="M0.500 0.500H8.500V6.500L4.500 9.500L0.500 6.500Z" fill="#3a78e0"/></svg>
<svg style="left:1004.30px;top:658.20px;" width="9" height="6" viewBox="0 0 9 6"><path d="M1 1L4.5 5L8 1" fill="none" stroke="#77777b" stroke-width="1.2"/></svg>
<div style="left:1020.80px;top:650.00px;width:1.00px;height:22.00px;background:#2f2f35;"></div>
<svg style="left:1030.50px;top:653.00px;" width="24" height="17" viewBox="0 0 24 17"><rect x="0.600" y="1" width="18" height="8" fill="none" stroke="#5d5d62" stroke-width="1.100"/><circle cx="16.5" cy="10.3" r="3.500" fill="#212127" stroke="#77777b" stroke-width="1.300"/><path d="M19.1 12.9L21.9 15.700000000000001" stroke="#77777b" stroke-width="1.700"/></svg>
<svg style="left:1064.00px;top:653.00px;" width="24" height="17" viewBox="0 0 24 17"><path d="M0.500 1H19M0.500 9H10M5 1V9M9 1V9" fill="none" stroke="#55555a" stroke-width="1" stroke-dasharray="2 1.200"/><circle cx="16.5" cy="10.3" r="3.500" fill="#212127" stroke="#77777b" stroke-width="1.300"/><path d="M19.1 12.9L21.9 15.700000000000001" stroke="#77777b" stroke-width="1.700"/></svg>
<svg style="left:1096.00px;top:653.00px;" width="24" height="17" viewBox="0 0 24 17"><path d="M0.500 1H18M2 1V4.500M5 1V3M8 1V4.500M11 1V3M14 1V4.500M17 1V3" stroke="#77777b" stroke-width="1"/><path d="M0.500 8.500H9" stroke="#55555a" stroke-width="1" stroke-dasharray="2 1.200"/><circle cx="16.5" cy="10.3" r="3.500" fill="#212127" stroke="#f2f2f2" stroke-width="1.300"/><path d="M19.1 12.9L21.9 15.700000000000001" stroke="#f2f2f2" stroke-width="1.700"/></svg>
<div style="left:1132.50px;top:660.30px;width:7.00px;height:1.00px;background:#6a6a6f;"></div>
<div style="left:1152.50px;top:660.20px;width:78.00px;height:1.80px;background:#161619;"></div>
<div style="left:1190.30px;top:657.50px;width:7.00px;height:7.00px;background:#9a9a9d;border-radius:50%;"></div>
<svg style="left:1234.00px;top:657.00px;" width="8" height="8" viewBox="0 0 8 8"><path d="M0.500 4H7.500M4 0.500V7.500" stroke="#6a6a6f" stroke-width="1"/></svg>
<svg style="left:1295.00px;top:654.00px;" width="16" height="14" viewBox="0 0 16 14"><path d="M0.800 4.500H4L8.500 1V13L4 9.500H0.800Z" fill="#f2f2f2"/><path d="M10.500 4.500a3.500 3.500 0 0 1 0 5M12.300 2.500a6 6 0 0 1 0 9" fill="none" stroke="#f2f2f2" stroke-width="1.200"/></svg>
<div style="left:1318.50px;top:659.90px;width:62.00px;height:2.30px;background:#3fa64c;"></div>
<div style="left:1379.00px;top:657.30px;width:7.40px;height:7.40px;background:#a2b2a4;border-radius:50%;"></div>
<div style="left:1394.50px;top:655.00px;width:18.00px;height:10.80px;background:#8b8b8e;border-radius:1.500px;"></div>
<span style="left:1396.30px;top:655.60px;font-size:8px;line-height:9.60px;color:#212127;font-weight:700;letter-spacing:-0.082px;">DIM</span>
<div style="left:1425.50px;top:653.00px;width:4.60px;height:16.50px;background:#1b1b1f;border:1px solid #303036;box-sizing:border-box;"></div>
<div style="left:1431.30px;top:653.00px;width:4.60px;height:16.50px;background:#1b1b1f;border:1px solid #303036;box-sizing:border-box;"></div>
<div style="left:394.00px;top:682.00px;width:189.00px;height:32.00px;background:#222228;"></div>
<div style="left:394.00px;top:714.00px;width:189.00px;height:1.00px;background:#1c1c20;"></div>
<div style="left:394.00px;top:715.00px;width:189.00px;height:12.00px;background:#222228;"></div>
<span style="left:443.40px;top:690.52px;font-size:16.8px;line-height:20.16px;color:#ececec;font-weight:700;letter-spacing:-0.073px;">01:00:24:20</span>
<div style="left:582.20px;top:682.00px;width:1.00px;height:222.00px;background:#17171a;"></div>
<div style="left:583.00px;top:682.00px;width:863.00px;height:31.00px;background:#29292f;"></div>
<div style="left:583.00px;top:712.50px;width:863.00px;height:1.00px;background:#25252a;"></div>
<div style="left:583.00px;top:682.00px;width:857.00px;height:9.00px;background:#2f2f36;"></div>
<svg style="left:583.00px;top:682.50px;" width="856" height="16" viewBox="0 0 856 16"><rect x="0.60" y="0" width="1.2" height="15" fill="#808086"/><rect x="3.02" y="0" width="1" height="7" fill="#393941"/><rect x="5.45" y="0" width="1" height="8" fill="#42424b"/><rect x="7.87" y="0" width="1" height="7" fill="#393941"/><rect x="10.30" y="0" width="1" height="8" fill="#42424b"/><rect x="12.72" y="0" width="1" height="7" fill="#393941"/><rect x="15.14" y="0" width="1" height="8" fill="#42424b"/><rect x="17.57" y="0" width="1" height="7" fill="#393941"/><rect x="19.99" y="0" width="1" height="9.5" fill="#50505a"/><rect x="22.41" y="0" width="1" height="7" fill="#393941"/><rect x="24.84" y="0" width="1" height="8" fill="#42424b"/><rect x="27.26" y="0" width="1" height="7" fill="#393941"/><rect x="29.69" y="0" width="1" height="8" fill="#42424b"/><rect x="32.11" y="0" width="1" height="7" fill="#393941"/><rect x="34.53" y="0" width="1" height="8" fill="#42424b"/><rect x="36.96" y="0" width="1" height="7" fill="#393941"/><rect x="39.38" y="0" width="1" height="9.5" fill="#50505a"/><rect x="41.80" y="0" width="1" height="7" fill="#393941"/><rect x="44.23" y="0" width="1" height="8" fill="#42424b"/><rect x="46.65" y="0" width="1" height="7" fill="#393941"/><rect x="49.08" y="0" width="1" height="8" fill="#42424b"/><rect x="51.50" y="0" width="1" height="7" fill="#393941"/><rect x="53.92" y="0" width="1" height="8" fill="#42424b"/><rect x="56.35" y="0" width="1" height="7" fill="#393941"/><rect x="58.77" y="0" width="1" height="9.5" fill="#50505a"/><rect x="61.19" y="0" width="1" height="7" fill="#393941"/><rect x="63.62" y="0" width="1" height="8" fill="#42424b"/><rect x="66.04" y="0" width="1" height="7" fill="#393941"/><rect x="68.47" y="0" width="1" height="8" fill="#42424b"/><rect x="70.89" y="0" width="1" height="7" fill="#393941"/><rect x="73.31" y="0" width="1" height="8" fill="#42424b"/><rect x="75.74" y="0" width="1" height="7" fill="#393941"/><rect x="78.16" y="0" width="1.1" height="12" fill="#6e6e75"/><rect x="80.58" y="0" width="1" height="7" fill="#393941"/><rect x="83.01" y="0" width="1" height="8" fill="#42424b"/><rect x="85.43" y="0" width="1" height="7" fill="#393941"/><rect x="87.86" y="0" width="1" height="8" fill="#42424b"/><rect x="90.28" y="0" width="1" height="7" fill="#393941"/><rect x="92.70" y="0" width="1" height="8" fill="#42424b"/><rect x="95.13" y="0" width="1" height="7" fill="#393941"/><rect x="97.55" y="0" width="1" height="9.5" fill="#50505a"/><rect x="99.97" y="0" width="1" height="7" fill="#393941"/><rect x="102.40" y="0" width="1" height="8" fill="#42424b"/><rect x="104.82" y="0" width="1" height="7" fill="#393941"/><rect x="107.25" y="0" width="1" height="8" fill="#42424b"/><rect x="109.67" y="0" width="1" height="7" fill="#393941"/><rect x="112.09" y="0" width="1" height="8" fill="#42424b"/><rect x="114.52" y="0" width="1" height="7" fill="#393941"/><rect x="116.94" y="0" width="1" height="9.5" fill="#50505a"/><rect x="119.36" y="0" width="1" height="7" fill="#393941"/><rect x="121.79" y="0" width="1" height="8" fill="#42424b"/><rect x="124.21" y="0" width="1" height="7" fill="#393941"/><rect x="126.63" y="0" width="1" height="8" fill="#42424b"/><rect x="129.06" y="0" width="1" height="7" fill="#393941"/><rect x="131.48" y="0" width="1" height="8" fill="#42424b"/><rect x="133.91" y="0" width="1" height="7" fill="#393941"/><rect x="136.33" y="0" width="1" height="9.5" fill="#50505a"/><rect x="138.75" y="0" width="1" height="7" fill="#393941"/><rect x="141.18" y="0" width="1" height="8" fill="#42424b"/><rect x="143.60" y="0" width="1" height="7" fill="#393941"/><rect x="146.03" y="0" width="1" height="8" fill="#42424b"/><rect x="148.45" y="0" width="1" height="7" fill="#393941"/><rect x="150.87" y="0" width="1" height="8" fill="#42424b"/><rect x="153.30" y="0" width="1" height="7" fill="#393941"/><rect x="155.72" y="0" width="1.2" height="15" fill="#808086"/><rect x="158.14" y="0" width="1" height="7" fill="#393941"/><rect x="160.57" y="0" width="1" height="8" fill="#42424b"/><rect x="162.99" y="0" width="1" height="7" fill="#393941"/><rect x="165.41" y="0" width="1" height="8" fill="#42424b"/><rect x="167.84" y="0" width="1" height="7" fill="#393941"/><rect x="170.26" y="0" width="1" height="8" fill="#42424b"/><rect x="172.69" y="0" width="1" height="7" fill="#393941"/><rect x="175.11" y="0" width="1" height="9.5" fill="#50505a"/><rect x="177.53" y="0" width="1" height="7" fill="#393941"/><rect x="179.96" y="0" width="1" height="8" fill="#42424b"/><rect x="182.38" y="0" width="1" height="7" fill="#393941"/><rect x="184.81" y="0" width="1" height="8" fill="#42424b"/><rect x="187.23" y="0" width="1" height="7" fill="#393941"/><rect x="189.65" y="0" width="1" height="8" fill="#42424b"/><rect x="192.08" y="0" width="1" height="7" fill="#393941"/><rect x="194.50" y="0" width="1" height="9.5" fill="#50505a"/><rect x="196.92" y="0" width="1" height="7" fill="#393941"/><rect x="199.35" y="0" width="1" height="8" fill="#42424b"/><rect x="201.77" y="0" width="1" height="7" fill="#393941"/><rect x="204.20" y="0" width="1" height="8" fill="#42424b"/><rect x="206.62" y="0" width="1" height="7" fill="#393941"/><rect x="209.04" y="0" width="1" height="8" fill="#42424b"/><rect x="211.47" y="0" width="1" height="7" fill="#393941"/><rect x="213.89" y="0" width="1" height="9.5" fill="#50505a"/><rect x="216.31" y="0" width="1" height="7" fill="#393941"/><rect x="218.74" y="0" width="1" height="8" fill="#42424b"/><rect x="221.16" y="0" width="1" height="7" fill="#393941"/><rect x="223.59" y="0" width="1" height="8" fill="#42424b"/><rect x="226.01" y="0" width="1" height="7" fill="#393941"/><rect x="228.43" y="0" width="1" height="8" fill="#42424b"/><rect x="230.86" y="0" width="1" height="7" fill="#393941"/><rect x="233.28" y="0" width="1.1" height="12" fill="#6e6e75"/><rect x="235.70" y="0" width="1" height="7" fill="#393941"/><rect x="238.13" y="0" width="1" height="8" fill="#42424b"/><rect x="240.55" y="0" width="1" height="7" fill="#393941"/><rect x="242.98" y="0" width="1" height="8" fill="#42424b"/><rect x="245.40" y="0" width="1" height="7" fill="#393941"/><rect x="247.82" y="0" width="1" height="8" fill="#42424b"/><rect x="250.25" y="0" width="1" height="7" fill="#393941"/><rect x="252.67" y="0" width="1" height="9.5" fill="#50505a"/><rect x="255.09" y="0" width="1" height="7" fill="#393941"/><rect x="257.52" y="0" width="1" height="8" fill="#42424b"/><rect x="259.94" y="0" width="1" height="7" fill="#393941"/><rect x="262.37" y="0" width="1" height="8" fill="#42424b"/><rect x="264.79" y="0" width="1" height="7" fill="#393941"/><rect x="267.21" y="0" width="1" height="8" fill="#42424b"/><rect x="269.64" y="0" width="1" height="7" fill="#393941"/><rect x="272.06" y="0" width="1" height="9.5" fill="#50505a"/><rect x="274.48" y="0" width="1" height="7" fill="#393941"/><rect x="276.91" y="0" width="1" height="8" fill="#42424b"/><rect x="279.33" y="0" width="1" height="7" fill="#393941"/><rect x="281.76" y="0" width="1" height="8" fill="#42424b"/><rect x="284.18" y="0" width="1" height="7" fill="#393941"/><rect x="286.60" y="0" width="1" height="8" fill="#42424b"/><rect x="289.03" y="0" width="1" height="7" fill="#393941"/><rect x="291.45" y="0" width="1" height="9.5" fill="#50505a"/><rect x="293.87" y="0" width="1" height="7" fill="#393941"/><rect x="296.30" y="0" width="1" height="8" fill="#42424b"/><rect x="298.72" y="0" width="1" height="7" fill="#393941"/><rect x="301.14" y="0" width="1" height="8" fill="#42424b"/><rect x="303.57" y="0" width="1" height="7" fill="#393941"/><rect x="305.99" y="0" width="1" height="8" fill="#42424b"/><rect x="308.42" y="0" width="1" height="7" fill="#393941"/><rect x="310.84" y="0" width="1.2" height="15" fill="#808086"/><rect x="313.26" y="0" width="1" height="7" fill="#393941"/><rect x="315.69" y="0" width="1" height="8" fill="#42424b"/><rect x="318.11" y="0" width="1" height="7" fill="#393941"/><rect x="320.54" y="0" width="1" height="8" fill="#42424b"/><rect x="322.96" y="0" width="1" height="7" fill="#393941"/><rect x="325.38" y="0" width="1" height="8" fill="#42424b"/><rect x="327.81" y="0" width="1" height="7" fill="#393941"/><rect x="330.23" y="0" width="1" height="9.5" fill="#50505a"/><rect x="332.65" y="0" width="1" height="7" fill="#393941"/><rect x="335.08" y="0" width="1" height="8" fill="#42424b"/><rect x="337.50" y="0" width="1" height="7" fill="#393941"/><rect x="339.92" y="0" width="1" height="8" fill="#42424b"/><rect x="342.35" y="0" width="1" height="7" fill="#393941"/><rect x="344.77" y="0" width="1" height="8" fill="#42424b"/><rect x="347.20" y="0" width="1" height="7" fill="#393941"/><rect x="349.62" y="0" width="1" height="9.5" fill="#50505a"/><rect x="352.04" y="0" width="1" height="7" fill="#393941"/><rect x="354.47" y="0" width="1" height="8" fill="#42424b"/><rect x="356.89" y="0" width="1" height="7" fill="#393941"/><rect x="359.32" y="0" width="1" height="8" fill="#42424b"/><rect x="361.74" y="0" width="1" height="7" fill="#393941"/><rect x="364.16" y="0" width="1" height="8" fill="#42424b"/><rect x="366.59" y="0" width="1" height="7" fill="#393941"/><rect x="369.01" y="0" width="1" height="9.5" fill="#50505a"/><rect x="371.43" y="0" width="1" height="7" fill="#393941"/><rect x="373.86" y="0" width="1" height="8" fill="#42424b"/><rect x="376.28" y="0" width="1" height="7" fill="#393941"/><rect x="378.71" y="0" width="1" height="8" fill="#42424b"/><rect x="381.13" y="0" width="1" height="7" fill="#393941"/><rect x="383.55" y="0" width="1" height="8" fill="#42424b"/><rect x="385.98" y="0" width="1" height="7" fill="#393941"/><rect x="388.40" y="0" width="1.1" height="12" fill="#6e6e75"/><rect x="390.82" y="0" width="1" height="7" fill="#393941"/><rect x="393.25" y="0" width="1" height="8" fill="#42424b"/><rect x="395.67" y="0" width="1" height="7" fill="#393941"/><rect x="398.10" y="0" width="1" height="8" fill="#42424b"/><rect x="400.52" y="0" width="1" height="7" fill="#393941"/><rect x="402.94" y="0" width="1" height="8" fill="#42424b"/><rect x="405.37" y="0" width="1" height="7" fill="#393941"/><rect x="407.79" y="0" width="1" height="9.5" fill="#50505a"/><rect x="410.21" y="0" width="1" height="7" fill="#393941"/><rect x="412.64" y="0" width="1" height="8" fill="#42424b"/><rect x="415.06" y="0" width="1" height="7" fill="#393941"/><rect x="417.49" y="0" width="1" height="8" fill="#42424b"/><rect x="419.91" y="0" width="1" height="7" fill="#393941"/><rect x="422.33" y="0" width="1" height="8" fill="#42424b"/><rect x="424.76" y="0" width="1" height="7" fill="#393941"/><rect x="427.18" y="0" width="1" height="9.5" fill="#50505a"/><rect x="429.60" y="0" width="1" height="7" fill="#393941"/><rect x="432.03" y="0" width="1" height="8" fill="#42424b"/><rect x="434.45" y="0" width="1" height="7" fill="#393941"/><rect x="436.88" y="0" width="1" height="8" fill="#42424b"/><rect x="439.30" y="0" width="1" height="7" fill="#393941"/><rect x="441.72" y="0" width="1" height="8" fill="#42424b"/><rect x="444.15" y="0" width="1" height="7" fill="#393941"/><rect x="446.57" y="0" width="1" height="9.5" fill="#50505a"/><rect x="448.99" y="0" width="1" height="7" fill="#393941"/><rect x="451.42" y="0" width="1" height="8" fill="#42424b"/><rect x="453.84" y="0" width="1" height="7" fill="#393941"/><rect x="456.27" y="0" width="1" height="8" fill="#42424b"/><rect x="458.69" y="0" width="1" height="7" fill="#393941"/><rect x="461.11" y="0" width="1" height="8" fill="#42424b"/><rect x="463.54" y="0" width="1" height="7" fill="#393941"/><rect x="465.96" y="0" width="1.2" height="15" fill="#808086"/><rect x="468.38" y="0" width="1" height="7" fill="#393941"/><rect x="470.81" y="0" width="1" height="8" fill="#42424b"/><rect x="473.23" y="0" width="1" height="7" fill="#393941"/><rect x="475.65" y="0" width="1" height="8" fill="#42424b"/><rect x="478.08" y="0" width="1" height="7" fill="#393941"/><rect x="480.50" y="0" width="1" height="8" fill="#42424b"/><rect x="482.93" y="0" width="1" height="7" fill="#393941"/><rect x="485.35" y="0" width="1" height="9.5" fill="#50505a"/><rect x="487.77" y="0" width="1" height="7" fill="#393941"/><rect x="490.20" y="0" width="1" height="8" fill="#42424b"/><rect x="492.62" y="0" width="1" height="7" fill="#393941"/><rect x="495.05" y="0" width="1" height="8" fill="#42424b"/><rect x="497.47" y="0" width="1" height="7" fill="#393941"/><rect x="499.89" y="0" width="1" height="8" fill="#42424b"/><rect x="502.32" y="0" width="1" height="7" fill="#393941"/><rect x="504.74" y="0" width="1" height="9.5" fill="#50505a"/><rect x="507.16" y="0" width="1" height="7" fill="#393941"/><rect x="509.59" y="0" width="1" height="8" fill="#42424b"/><rect x="512.01" y="0" width="1" height="7" fill="#393941"/><rect x="514.43" y="0" width="1" height="8" fill="#42424b"/><rect x="516.86" y="0" width="1" height="7" fill="#393941"/><rect x="519.28" y="0" width="1" height="8" fill="#42424b"/><rect x="521.71" y="0" width="1" height="7" fill="#393941"/><rect x="524.13" y="0" width="1" height="9.5" fill="#50505a"/><rect x="526.55" y="0" width="1" height="7" fill="#393941"/><rect x="528.98" y="0" width="1" height="8" fill="#42424b"/><rect x="531.40" y="0" width="1" height="7" fill="#393941"/><rect x="533.83" y="0" width="1" height="8" fill="#42424b"/><rect x="536.25" y="0" width="1" height="7" fill="#393941"/><rect x="538.67" y="0" width="1" height="8" fill="#42424b"/><rect x="541.10" y="0" width="1" height="7" fill="#393941"/><rect x="543.52" y="0" width="1.1" height="12" fill="#6e6e75"/><rect x="545.94" y="0" width="1" height="7" fill="#393941"/><rect x="548.37" y="0" width="1" height="8" fill="#42424b"/><rect x="550.79" y="0" width="1" height="7" fill="#393941"/><rect x="553.22" y="0" width="1" height="8" fill="#42424b"/><rect x="555.64" y="0" width="1" height="7" fill="#393941"/><rect x="558.06" y="0" width="1" height="8" fill="#42424b"/><rect x="560.49" y="0" width="1" height="7" fill="#393941"/><rect x="562.91" y="0" width="1" height="9.5" fill="#50505a"/><rect x="565.33" y="0" width="1" height="7" fill="#393941"/><rect x="567.76" y="0" width="1" height="8" fill="#42424b"/><rect x="570.18" y="0" width="1" height="7" fill="#393941"/><rect x="572.61" y="0" width="1" height="8" fill="#42424b"/><rect x="575.03" y="0" width="1" height="7" fill="#393941"/><rect x="577.45" y="0" width="1" height="8" fill="#42424b"/><rect x="579.88" y="0" width="1" height="7" fill="#393941"/><rect x="582.30" y="0" width="1" height="9.5" fill="#50505a"/><rect x="584.72" y="0" width="1" height="7" fill="#393941"/><rect x="587.15" y="0" width="1" height="8" fill="#42424b"/><rect x="589.57" y="0" width="1" height="7" fill="#393941"/><rect x="591.99" y="0" width="1" height="8" fill="#42424b"/><rect x="594.42" y="0" width="1" height="7" fill="#393941"/><rect x="596.84" y="0" width="1" height="8" fill="#42424b"/><rect x="599.27" y="0" width="1" height="7" fill="#393941"/><rect x="601.69" y="0" width="1" height="9.5" fill="#50505a"/><rect x="604.11" y="0" width="1" height="7" fill="#393941"/><rect x="606.54" y="0" width="1" height="8" fill="#42424b"/><rect x="608.96" y="0" width="1" height="7" fill="#393941"/><rect x="611.38" y="0" width="1" height="8" fill="#42424b"/><rect x="613.81" y="0" width="1" height="7" fill="#393941"/><rect x="616.23" y="0" width="1" height="8" fill="#42424b"/><rect x="618.66" y="0" width="1" height="7" fill="#393941"/><rect x="621.08" y="0" width="1.2" height="15" fill="#808086"/><rect x="623.50" y="0" width="1" height="7" fill="#393941"/><rect x="625.93" y="0" width="1" height="8" fill="#42424b"/><rect x="628.35" y="0" width="1" height="7" fill="#393941"/><rect x="630.78" y="0" width="1" height="8" fill="#42424b"/><rect x="633.20" y="0" width="1" height="7" fill="#393941"/><rect x="635.62" y="0" width="1" height="8" fill="#42424b"/><rect x="638.05" y="0" width="1" height="7" fill="#393941"/><rect x="640.47" y="0" width="1" height="9.5" fill="#50505a"/><rect x="642.89" y="0" width="1" height="7" fill="#393941"/><rect x="645.32" y="0" width="1" height="8" fill="#42424b"/><rect x="647.74" y="0" width="1" height="7" fill="#393941"/><rect x="650.16" y="0" width="1" height="8" fill="#42424b"/><rect x="652.59" y="0" width="1" height="7" fill="#393941"/><rect x="655.01" y="0" width="1" height="8" fill="#42424b"/><rect x="657.44" y="0" width="1" height="7" fill="#393941"/><rect x="659.86" y="0" width="1" height="9.5" fill="#50505a"/><rect x="662.28" y="0" width="1" height="7" fill="#393941"/><rect x="664.71" y="0" width="1" height="8" fill="#42424b"/><rect x="667.13" y="0" width="1" height="7" fill="#393941"/><rect x="669.56" y="0" width="1" height="8" fill="#42424b"/><rect x="671.98" y="0" width="1" height="7" fill="#393941"/><rect x="674.40" y="0" width="1" height="8" fill="#42424b"/><rect x="676.83" y="0" width="1" height="7" fill="#393941"/><rect x="679.25" y="0" width="1" height="9.5" fill="#50505a"/><rect x="681.67" y="0" width="1" height="7" fill="#393941"/><rect x="684.10" y="0" width="1" height="8" fill="#42424b"/><rect x="686.52" y="0" width="1" height="7" fill="#393941"/><rect x="688.95" y="0" width="1" height="8" fill="#42424b"/><rect x="691.37" y="0" width="1" height="7" fill="#393941"/><rect x="693.79" y="0" width="1" height="8" fill="#42424b"/><rect x="696.22" y="0" width="1" height="7" fill="#393941"/><rect x="698.64" y="0" width="1.1" height="12" fill="#6e6e75"/><rect x="701.06" y="0" width="1" height="7" fill="#393941"/><rect x="703.49" y="0" width="1" height="8" fill="#42424b"/><rect x="705.91" y="0" width="1" height="7" fill="#393941"/><rect x="708.34" y="0" width="1" height="8" fill="#42424b"/><rect x="710.76" y="0" width="1" height="7" fill="#393941"/><rect x="713.18" y="0" width="1" height="8" fill="#42424b"/><rect x="715.61" y="0" width="1" height="7" fill="#393941"/><rect x="718.03" y="0" width="1" height="9.5" fill="#50505a"/><rect x="720.45" y="0" width="1" height="7" fill="#393941"/><rect x="722.88" y="0" width="1" height="8" fill="#42424b"/><rect x="725.30" y="0" width="1" height="7" fill="#393941"/><rect x="727.72" y="0" width="1" height="8" fill="#42424b"/><rect x="730.15" y="0" width="1" height="7" fill="#393941"/><rect x="732.57" y="0" width="1" height="8" fill="#42424b"/><rect x="735.00" y="0" width="1" height="7" fill="#393941"/><rect x="737.42" y="0" width="1" height="9.5" fill="#50505a"/><rect x="739.84" y="0" width="1" height="7" fill="#393941"/><rect x="742.27" y="0" width="1" height="8" fill="#42424b"/><rect x="744.69" y="0" width="1" height="7" fill="#393941"/><rect x="747.12" y="0" width="1" height="8" fill="#42424b"/><rect x="749.54" y="0" width="1" height="7" fill="#393941"/><rect x="751.96" y="0" width="1" height="8" fill="#42424b"/><rect x="754.39" y="0" width="1" height="7" fill="#393941"/><rect x="756.81" y="0" width="1" height="9.5" fill="#50505a"/><rect x="759.23" y="0" width="1" height="7" fill="#393941"/><rect x="761.66" y="0" width="1" height="8" fill="#42424b"/><rect x="764.08" y="0" width="1" height="7" fill="#393941"/><rect x="766.51" y="0" width="1" height="8" fill="#42424b"/><rect x="768.93" y="0" width="1" height="7" fill="#393941"/><rect x="771.35" y="0" width="1" height="8" fill="#42424b"/><rect x="773.78" y="0" width="1" height="7" fill="#393941"/><rect x="776.20" y="0" width="1.2" height="15" fill="#808086"/><rect x="778.62" y="0" width="1" height="7" fill="#393941"/><rect x="781.05" y="0" width="1" height="8" fill="#42424b"/><rect x="783.47" y="0" width="1" height="7" fill="#393941"/><rect x="785.89" y="0" width="1" height="8" fill="#42424b"/><rect x="788.32" y="0" width="1" height="7" fill="#393941"/><rect x="790.74" y="0" width="1" height="8" fill="#42424b"/><rect x="793.17" y="0" width="1" height="7" fill="#393941"/><rect x="795.59" y="0" width="1" height="9.5" fill="#50505a"/><rect x="798.01" y="0" width="1" height="7" fill="#393941"/><rect x="800.44" y="0" width="1" height="8" fill="#42424b"/><rect x="802.86" y="0" width="1" height="7" fill="#393941"/><rect x="805.29" y="0" width="1" height="8" fill="#42424b"/><rect x="807.71" y="0" width="1" height="7" fill="#393941"/><rect x="810.13" y="0" width="1" height="8" fill="#42424b"/><rect x="812.56" y="0" width="1" height="7" fill="#393941"/><rect x="814.98" y="0" width="1" height="9.5" fill="#50505a"/><rect x="817.40" y="0" width="1" height="7" fill="#393941"/><rect x="819.83" y="0" width="1" height="8" fill="#42424b"/><rect x="822.25" y="0" width="1" height="7" fill="#393941"/><rect x="824.68" y="0" width="1" height="8" fill="#42424b"/><rect x="827.10" y="0" width="1" height="7" fill="#393941"/><rect x="829.52" y="0" width="1" height="8" fill="#42424b"/><rect x="831.95" y="0" width="1" height="7" fill="#393941"/><rect x="834.37" y="0" width="1" height="9.5" fill="#50505a"/><rect x="836.79" y="0" width="1" height="7" fill="#393941"/><rect x="839.22" y="0" width="1" height="8" fill="#42424b"/><rect x="841.64" y="0" width="1" height="7" fill="#393941"/><rect x="844.07" y="0" width="1" height="8" fill="#42424b"/><rect x="846.49" y="0" width="1" height="7" fill="#393941"/><rect x="848.91" y="0" width="1" height="8" fill="#42424b"/><rect x="851.34" y="0" width="1" height="7" fill="#393941"/><rect x="853.76" y="0" width="1.1" height="12" fill="#6e6e75"/></svg>
<span style="left:587.70px;top:693.48px;font-size:8.7px;line-height:10.44px;color:#9a9a9f;font-weight:400;letter-spacing:0.004px;">01:00:00:00</span>
<span style="left:742.82px;top:693.48px;font-size:8.7px;line-height:10.44px;color:#9a9a9f;font-weight:400;letter-spacing:0.004px;">01:00:08:00</span>
<span style="left:897.94px;top:693.48px;font-size:8.7px;line-height:10.44px;color:#9a9a9f;font-weight:400;letter-spacing:0.004px;">01:00:16:00</span>
<span style="left:1053.06px;top:693.48px;font-size:8.7px;line-height:10.44px;color:#9a9a9f;font-weight:400;letter-spacing:0.004px;">01:00:24:00</span>
<span style="left:1208.18px;top:693.48px;font-size:8.7px;line-height:10.44px;color:#9a9a9f;font-weight:400;letter-spacing:0.004px;">01:00:32:00</span>
<span style="left:1363.30px;top:693.48px;font-size:8.7px;line-height:10.44px;color:#9a9a9f;font-weight:400;letter-spacing:0.004px;">01:00:40:00</span>
<div style="left:738.22px;top:713.50px;width:1.00px;height:190.00px;background:#33333a;"></div>
<div style="left:893.34px;top:713.50px;width:1.00px;height:190.00px;background:#33333a;"></div>
<div style="left:1048.46px;top:713.50px;width:1.00px;height:190.00px;background:#33333a;"></div>
<div style="left:1203.58px;top:713.50px;width:1.00px;height:190.00px;background:#33333a;"></div>
<div style="left:1358.70px;top:713.50px;width:1.00px;height:190.00px;background:#33333a;"></div>
<div style="left:1437.20px;top:682.00px;width:8.80px;height:31.00px;background:#29292f;"></div>
<div style="left:1436.40px;top:713.50px;width:1.20px;height:190.50px;background:#1f1f24;"></div>
<div style="left:393.60px;top:590.00px;width:2.40px;height:320.50px;background:#141418;"></div>
<div style="left:398.20px;top:727.00px;width:184.00px;height:85.50px;background:#222228;"></div>
<div style="left:398.20px;top:815.00px;width:184.00px;height:67.50px;background:#222228;"></div>
<div style="left:395.80px;top:727.00px;width:2.40px;height:85.50px;background:#5779a6;"></div>
<div style="left:395.80px;top:815.00px;width:2.40px;height:67.50px;background:#4d9676;"></div>
<div style="left:398.20px;top:726.50px;width:184.00px;height:1.00px;background:#1a1a1d;"></div>
<div style="left:398.20px;top:747.80px;width:184.00px;height:1.00px;background:#1a1a1d;"></div>
<div style="left:398.20px;top:769.10px;width:184.00px;height:1.00px;background:#1a1a1d;"></div>
<div style="left:398.20px;top:790.30px;width:184.00px;height:1.00px;background:#1a1a1d;"></div>
<div style="left:394.00px;top:811.00px;width:1052.00px;height:4.50px;background:#121216;"></div>
<div style="left:394.00px;top:812.20px;width:1052.00px;height:1.70px;background:#3c3c45;"></div>
<div style="left:398.20px;top:848.00px;width:184.00px;height:1.00px;background:#1a1a1d;"></div>
<div style="left:398.20px;top:882.30px;width:184.00px;height:1.00px;background:#1a1a1d;"></div>
<div style="left:411.20px;top:727.00px;width:1.00px;height:155.50px;background:#1a1a1d;"></div>
<div style="left:445.80px;top:727.00px;width:1.00px;height:155.50px;background:#1a1a1d;"></div>
<span style="left:424.60px;top:732.24px;font-size:10.6px;line-height:12.72px;color:#f2f2f2;font-weight:700;letter-spacing:-0.600px;">V2</span>
<span style="left:424.60px;top:775.04px;font-size:10.6px;line-height:12.72px;color:#f2f2f2;font-weight:700;letter-spacing:-0.600px;">V1</span>
<span style="left:454.00px;top:730.64px;font-size:11.6px;line-height:13.92px;color:#ececec;font-weight:400;letter-spacing:-0.472px;">Video 2</span>
<span style="left:454.00px;top:774.24px;font-size:11.6px;line-height:13.92px;color:#ececec;font-weight:400;letter-spacing:-0.600px;">Video 1</span>
<svg style="left:458.50px;top:753.20px;" width="11" height="12" viewBox="0 0 11 12"><path d="M3 5.500V4a2.500 2.500 0 0 1 5 0V5.500" fill="none" stroke="#3d3d44" stroke-width="1.200"/><rect x="1.200" y="5.500" width="8.600" height="5.800" rx="0.800" fill="#3d3d44"/></svg>
<svg style="left:478.80px;top:753.70px;" width="15" height="11" viewBox="0 0 15 11"><rect x="0.900" y="0.900" width="13.200" height="9.200" rx="1.600" fill="none" stroke="#dcdcdc" stroke-width="1.500"/><path d="M6 3.300L3.800 5.500L6 7.700M9 3.300L11.200 5.500L9 7.700" fill="none" stroke="#dcdcdc" stroke-width="1.300"/></svg>
<svg style="left:500.90px;top:753.70px;" width="15" height="11" viewBox="0 0 15 11"><rect x="0.600" y="0.600" width="13.800" height="9.800" rx="1" fill="#8b8b8e"/><rect x="3.200" y="2.200" width="8.600" height="6.600" fill="#55555a"/><path d="M1.900 1.500v8M13.100 1.500v8" stroke="#222228" stroke-width="1" stroke-dasharray="1.300 1.300"/></svg>
<svg style="left:458.50px;top:796.00px;" width="11" height="12" viewBox="0 0 11 12"><path d="M3 5.500V4a2.500 2.500 0 0 1 5 0V5.500" fill="none" stroke="#3d3d44" stroke-width="1.200"/><rect x="1.200" y="5.500" width="8.600" height="5.800" rx="0.800" fill="#3d3d44"/></svg>
<svg style="left:478.80px;top:796.50px;" width="15" height="11" viewBox="0 0 15 11"><rect x="0.900" y="0.900" width="13.200" height="9.200" rx="1.600" fill="none" stroke="#dcdcdc" stroke-width="1.500"/><path d="M6 3.300L3.800 5.500L6 7.700M9 3.300L11.200 5.500L9 7.700" fill="none" stroke="#dcdcdc" stroke-width="1.300"/></svg>
<svg style="left:500.90px;top:796.50px;" width="15" height="11" viewBox="0 0 15 11"><rect x="0.600" y="0.600" width="13.800" height="9.800" rx="1" fill="#8b8b8e"/><rect x="3.200" y="2.200" width="8.600" height="6.600" fill="#55555a"/><path d="M1.900 1.500v8M13.100 1.500v8" stroke="#222228" stroke-width="1" stroke-dasharray="1.300 1.300"/></svg>
<div style="left:417.00px;top:823.80px;width:26.00px;height:15.80px;background:transparent;border:1px solid #b93a3a;box-sizing:border-box;"></div>
<span style="left:424.00px;top:826.88px;font-size:10.2px;line-height:12.24px;color:#f2f2f2;font-weight:700;letter-spacing:-0.600px;">A1</span>
<span style="left:424.00px;top:862.56px;font-size:10.4px;line-height:12.48px;color:#8e8e92;font-weight:400;letter-spacing:-0.421px;">A2</span>
<svg style="left:458.50px;top:826.50px;" width="11" height="12" viewBox="0 0 11 12"><path d="M3 5.500V4a2.500 2.500 0 0 1 5 0V5.500" fill="none" stroke="#3d3d44" stroke-width="1.200"/><rect x="1.200" y="5.500" width="8.600" height="5.800" rx="0.800" fill="#3d3d44"/></svg>
<svg style="left:478.80px;top:827.00px;" width="15" height="11" viewBox="0 0 15 11"><rect x="0.900" y="0.900" width="13.200" height="9.200" rx="1.600" fill="none" stroke="#dcdcdc" stroke-width="1.500"/><path d="M6 3.300L3.800 5.500L6 7.700M9 3.300L11.200 5.500L9 7.700" fill="none" stroke="#dcdcdc" stroke-width="1.300"/></svg>
<div style="left:502.30px;top:826.50px;width:12.00px;height:12.00px;background:#35353b;border-radius:2px;"></div>
<span style="left:505.13px;top:827.10px;font-size:9.5px;line-height:11.40px;color:#5d5d62;font-weight:700;letter-spacing:0.000px;letter-spacing:0.000px;">S</span>
<div style="left:525.80px;top:826.50px;width:12.50px;height:12.00px;background:#35353b;border-radius:2px;"></div>
<span style="left:528.04px;top:827.10px;font-size:9.5px;line-height:11.40px;color:#6f6f74;font-weight:700;letter-spacing:0.000px;letter-spacing:0.000px;">M</span>
<span style="left:561.80px;top:828.72px;font-size:10.3px;line-height:12.36px;color:#808085;font-weight:400;letter-spacing:-0.309px;">2.0</span>
<svg style="left:458.50px;top:861.00px;" width="11" height="12" viewBox="0 0 11 12"><path d="M3 5.500V4a2.500 2.500 0 0 1 5 0V5.500" fill="none" stroke="#3d3d44" stroke-width="1.200"/><rect x="1.200" y="5.500" width="8.600" height="5.800" rx="0.800" fill="#3d3d44"/></svg>
<svg style="left:478.80px;top:861.50px;" width="15" height="11" viewBox="0 0 15 11"><rect x="0.900" y="0.900" width="13.200" height="9.200" rx="1.600" fill="none" stroke="#dcdcdc" stroke-width="1.500"/><path d="M6 3.300L3.800 5.500L6 7.700M9 3.300L11.200 5.500L9 7.700" fill="none" stroke="#dcdcdc" stroke-width="1.300"/></svg>
<div style="left:502.30px;top:861.00px;width:12.00px;height:12.00px;background:#35353b;border-radius:2px;"></div>
<span style="left:505.13px;top:861.60px;font-size:9.5px;line-height:11.40px;color:#5d5d62;font-weight:700;letter-spacing:0.000px;letter-spacing:0.000px;">S</span>
<div style="left:525.80px;top:861.00px;width:12.50px;height:12.00px;background:#35353b;border-radius:2px;"></div>
<span style="left:528.04px;top:861.60px;font-size:9.5px;line-height:11.40px;color:#6f6f74;font-weight:700;letter-spacing:0.000px;letter-spacing:0.000px;">M</span>
<span style="left:561.80px;top:863.22px;font-size:10.3px;line-height:12.36px;color:#808085;font-weight:400;letter-spacing:-0.309px;">2.0</span>
<div style="left:394.00px;top:883.30px;width:188.20px;height:20.70px;background:#232329;"></div>
<div style="left:394.00px;top:904.00px;width:189.00px;height:6.50px;background:#2c2c32;"></div>
<div style="left:583.00px;top:904.00px;width:857.00px;height:6.50px;background:#222228;"></div>
<div style="left:584.00px;top:904.50px;width:425.00px;height:5.00px;background:#4e4e54;border-radius:2.500px;"></div>
<svg width="0" height="0" style="left:0;top:0;"><defs><filter id="sb" x="-2%" y="-10%" width="104%" height="120%"><feGaussianBlur stdDeviation="0.550"/></filter></defs></svg>
<div style="left:583.50px;top:769.30px;width:84.00px;height:41.70px;background:#4e80ba;border-radius:2px;box-shadow:inset 0 0 0 1px #2f5d98;"></div>
<svg style="left:585.00px;top:772.30px;" width="81.0" height="19" viewBox="0 0 81.0 19"><clipPath id="cs0"><rect width="81.0" height="19"/></clipPath><g clip-path="url(#cs0)"><g filter="url(#sb)"><rect x="0.00" y="0.00" width="11.02" height="19.00" fill="#4a4e52" opacity="1"/><rect x="1.28" y="3.42" width="2.14" height="15.58" fill="#c3c6c9" opacity="1"/><rect x="6.63" y="4.18" width="2.35" height="14.82" fill="#aeb2b5" opacity="1"/><rect x="2.14" y="0.38" width="6.42" height="3.04" fill="#e9ebec" opacity="1"/><rect x="4.07" y="6.65" width="2.14" height="12.35" fill="#24272a" opacity="1"/><rect x="10.70" y="0.00" width="11.02" height="19.00" fill="#4a4e52" opacity="1"/><rect x="11.98" y="3.42" width="2.14" height="15.58" fill="#c3c6c9" opacity="1"/><rect x="17.33" y="4.18" width="2.35" height="14.82" fill="#aeb2b5" opacity="1"/><rect x="12.84" y="0.38" width="6.42" height="3.04" fill="#e9ebec" opacity="1"/><rect x="14.77" y="6.65" width="2.14" height="12.35" fill="#24272a" opacity="1"/><rect x="21.40" y="0.00" width="11.02" height="19.00" fill="#4a4e52" opacity="1"/><rect x="22.68" y="3.42" width="2.14" height="15.58" fill="#c3c6c9" opacity="1"/><rect x="28.03" y="4.18" width="2.35" height="14.82" fill="#aeb2b5" opacity="1"/><rect x="23.54" y="0.38" width="6.42" height="3.04" fill="#e9ebec" opacity="1"/><rect x="25.47" y="6.65" width="2.14" height="12.35" fill="#24272a" opacity="1"/><rect x="32.10" y="0.00" width="11.02" height="19.00" fill="#4a4e52" opacity="1"/><rect x="33.38" y="3.42" width="2.14" height="15.58" fill="#c3c6c9" opacity="1"/><rect x="38.73" y="4.18" width="2.35" height="14.82" fill="#aeb2b5" opacity="1"/><rect x="34.24" y="0.38" width="6.42" height="3.04" fill="#e9ebec" opacity="1"/><rect x="36.17" y="6.65" width="2.14" height="12.35" fill="#24272a" opacity="1"/><rect x="42.80" y="0.00" width="11.02" height="19.00" fill="#17191b" opacity="1"/><rect x="46.01" y="5.70" width="1.28" height="13.30" fill="#3a3d40" opacity="1"/><rect x="53.50" y="0.00" width="11.02" height="19.00" fill="#4a4e52" opacity="1"/><rect x="54.78" y="3.42" width="2.14" height="15.58" fill="#c3c6c9" opacity="1"/><rect x="60.13" y="4.18" width="2.35" height="14.82" fill="#aeb2b5" opacity="1"/><rect x="55.64" y="0.38" width="6.42" height="3.04" fill="#e9ebec" opacity="1"/><rect x="57.57" y="6.65" width="2.14" height="12.35" fill="#24272a" opacity="1"/><rect x="64.20" y="0.00" width="11.02" height="19.00" fill="#4a4e52" opacity="1"/><rect x="65.48" y="3.42" width="2.14" height="15.58" fill="#c3c6c9" opacity="1"/><rect x="70.83" y="4.18" width="2.35" height="14.82" fill="#aeb2b5" opacity="1"/><rect x="66.34" y="0.38" width="6.42" height="3.04" fill="#e9ebec" opacity="1"/><rect x="68.27" y="6.65" width="2.14" height="12.35" fill="#24272a" opacity="1"/><rect x="74.90" y="0.00" width="11.02" height="19.00" fill="#4a4e52" opacity="1"/><rect x="76.18" y="3.42" width="2.14" height="15.58" fill="#c3c6c9" opacity="1"/><rect x="81.53" y="4.18" width="2.35" height="14.82" fill="#aeb2b5" opacity="1"/><rect x="77.04" y="0.38" width="6.42" height="3.04" fill="#e9ebec" opacity="1"/><rect x="78.97" y="6.65" width="2.14" height="12.35" fill="#24272a" opacity="1"/></g></g></svg>
<span style="left:587.10px;top:797.54px;font-size:9.6px;line-height:11.52px;color:#eef4fb;font-weight:400;letter-spacing:-0.313px;">cycles-F1-106f00...</span>
<div style="left:670.20px;top:769.30px;width:83.80px;height:41.70px;background:#4e80ba;border-radius:2px;box-shadow:inset 0 0 0 1px #2f5d98;"></div>
<svg style="left:671.70px;top:772.30px;" width="80.79999999999995" height="19" viewBox="0 0 80.8 19"><clipPath id="cs1"><rect width="80.8" height="19"/></clipPath><g clip-path="url(#cs1)"><g filter="url(#sb)"><rect x="0.00" y="0.00" width="11.02" height="19.00" fill="#44515e" opacity="1"/><rect x="1.07" y="3.04" width="2.14" height="11.40" fill="#b4bec8" opacity="1"/><rect x="6.85" y="3.80" width="2.14" height="10.64" fill="#9eaab6" opacity="1"/><rect x="2.14" y="0.38" width="6.42" height="2.66" fill="#e6eaee" opacity="1"/><rect x="4.07" y="5.70" width="2.14" height="9.50" fill="#1f2a36" opacity="1"/><rect x="0.00" y="14.06" width="11.02" height="4.94" fill="#28394c" opacity="1"/><rect x="10.70" y="0.00" width="11.02" height="19.00" fill="#44515e" opacity="1"/><rect x="11.77" y="3.04" width="2.14" height="11.40" fill="#b4bec8" opacity="1"/><rect x="17.55" y="3.80" width="2.14" height="10.64" fill="#9eaab6" opacity="1"/><rect x="12.84" y="0.38" width="6.42" height="2.66" fill="#e6eaee" opacity="1"/><rect x="14.77" y="5.70" width="2.14" height="9.50" fill="#1f2a36" opacity="1"/><rect x="10.70" y="14.06" width="11.02" height="4.94" fill="#28394c" opacity="1"/><rect x="21.40" y="0.00" width="11.02" height="19.00" fill="#44515e" opacity="1"/><rect x="22.47" y="3.04" width="2.14" height="11.40" fill="#b4bec8" opacity="1"/><rect x="28.25" y="3.80" width="2.14" height="10.64" fill="#9eaab6" opacity="1"/><rect x="23.54" y="0.38" width="6.42" height="2.66" fill="#e6eaee" opacity="1"/><rect x="25.47" y="5.70" width="2.14" height="9.50" fill="#1f2a36" opacity="1"/><rect x="21.40" y="14.06" width="11.02" height="4.94" fill="#28394c" opacity="1"/><rect x="32.10" y="0.00" width="11.02" height="19.00" fill="#44515e" opacity="1"/><rect x="33.17" y="3.04" width="2.14" height="11.40" fill="#b4bec8" opacity="1"/><rect x="38.95" y="3.80" width="2.14" height="10.64" fill="#9eaab6" opacity="1"/><rect x="34.24" y="0.38" width="6.42" height="2.66" fill="#e6eaee" opacity="1"/><rect x="36.17" y="5.70" width="2.14" height="9.50" fill="#1f2a36" opacity="1"/><rect x="32.10" y="14.06" width="11.02" height="4.94" fill="#28394c" opacity="1"/><rect x="42.80" y="0.00" width="11.02" height="19.00" fill="#44515e" opacity="1"/><rect x="43.87" y="3.04" width="2.14" height="11.40" fill="#b4bec8" opacity="1"/><rect x="49.65" y="3.80" width="2.14" height="10.64" fill="#9eaab6" opacity="1"/><rect x="44.94" y="0.38" width="6.42" height="2.66" fill="#e6eaee" opacity="1"/><rect x="46.87" y="5.70" width="2.14" height="9.50" fill="#1f2a36" opacity="1"/><rect x="42.80" y="14.06" width="11.02" height="4.94" fill="#28394c" opacity="1"/><rect x="53.50" y="0.00" width="11.02" height="19.00" fill="#44515e" opacity="1"/><rect x="54.57" y="3.04" width="2.14" height="11.40" fill="#b4bec8" opacity="1"/><rect x="60.35" y="3.80" width="2.14" height="10.64" fill="#9eaab6" opacity="1"/><rect x="55.64" y="0.38" width="6.42" height="2.66" fill="#e6eaee" opacity="1"/><rect x="57.57" y="5.70" width="2.14" height="9.50" fill="#1f2a36" opacity="1"/><rect x="53.50" y="14.06" width="11.02" height="4.94" fill="#28394c" opacity="1"/><rect x="64.20" y="0.00" width="11.02" height="19.00" fill="#44515e" opacity="1"/><rect x="65.27" y="3.04" width="2.14" height="11.40" fill="#b4bec8" opacity="1"/><rect x="71.05" y="3.80" width="2.14" height="10.64" fill="#9eaab6" opacity="1"/><rect x="66.34" y="0.38" width="6.42" height="2.66" fill="#e6eaee" opacity="1"/><rect x="68.27" y="5.70" width="2.14" height="9.50" fill="#1f2a36" opacity="1"/><rect x="64.20" y="14.06" width="11.02" height="4.94" fill="#28394c" opacity="1"/><rect x="74.90" y="0.00" width="11.02" height="19.00" fill="#44515e" opacity="1"/><rect x="75.97" y="3.04" width="2.14" height="11.40" fill="#b4bec8" opacity="1"/><rect x="81.75" y="3.80" width="2.14" height="10.64" fill="#9eaab6" opacity="1"/><rect x="77.04" y="0.38" width="6.42" height="2.66" fill="#e6eaee" opacity="1"/><rect x="78.97" y="5.70" width="2.14" height="9.50" fill="#1f2a36" opacity="1"/><rect x="74.90" y="14.06" width="11.02" height="4.94" fill="#28394c" opacity="1"/></g></g></svg>
<span style="left:673.80px;top:797.54px;font-size:9.6px;line-height:11.52px;color:#eef4fb;font-weight:400;letter-spacing:-0.324px;">cycles-F2-106f01...</span>
<div style="left:756.60px;top:769.30px;width:83.60px;height:41.70px;background:#4e80ba;border-radius:2px;box-shadow:inset 0 0 0 1px #2f5d98;"></div>
<svg style="left:758.10px;top:772.30px;" width="80.60000000000002" height="19" viewBox="0 0 80.6 19"><clipPath id="cs2"><rect width="80.6" height="19"/></clipPath><g clip-path="url(#cs2)"><g filter="url(#sb)"><rect x="0.00" y="0.00" width="11.02" height="19.00" fill="#c6c9cc" opacity="1"/><rect x="1.60" y="0.95" width="7.49" height="3.80" fill="#eef0f1" opacity="1"/><rect x="2.35" y="5.70" width="1.07" height="8.55" fill="#8a8e92" opacity="1"/><rect x="6.63" y="5.70" width="1.07" height="8.55" fill="#8a8e92" opacity="1"/><rect x="0.00" y="15.20" width="11.02" height="3.80" fill="#dcdfe1" opacity="1"/><rect x="10.70" y="0.00" width="11.02" height="19.00" fill="#c6c9cc" opacity="1"/><rect x="12.30" y="0.95" width="7.49" height="3.80" fill="#eef0f1" opacity="1"/><rect x="13.05" y="5.70" width="1.07" height="8.55" fill="#8a8e92" opacity="1"/><rect x="17.33" y="5.70" width="1.07" height="8.55" fill="#8a8e92" opacity="1"/><rect x="10.70" y="15.20" width="11.02" height="3.80" fill="#dcdfe1" opacity="1"/><rect x="21.40" y="0.00" width="11.02" height="19.00" fill="#c6c9cc" opacity="1"/><rect x="23.00" y="0.95" width="7.49" height="3.80" fill="#eef0f1" opacity="1"/><rect x="23.75" y="5.70" width="1.07" height="8.55" fill="#8a8e92" opacity="1"/><rect x="28.03" y="5.70" width="1.07" height="8.55" fill="#8a8e92" opacity="1"/><rect x="21.40" y="15.20" width="11.02" height="3.80" fill="#dcdfe1" opacity="1"/><rect x="32.10" y="0.00" width="11.02" height="19.00" fill="#c6c9cc" opacity="1"/><rect x="33.70" y="0.95" width="7.49" height="3.80" fill="#eef0f1" opacity="1"/><rect x="34.45" y="5.70" width="1.07" height="8.55" fill="#8a8e92" opacity="1"/><rect x="38.73" y="5.70" width="1.07" height="8.55" fill="#8a8e92" opacity="1"/><rect x="32.10" y="15.20" width="11.02" height="3.80" fill="#dcdfe1" opacity="1"/><rect x="42.80" y="0.00" width="11.02" height="19.00" fill="#c6c9cc" opacity="1"/><rect x="44.40" y="0.95" width="7.49" height="3.80" fill="#eef0f1" opacity="1"/><rect x="45.15" y="5.70" width="1.07" height="8.55" fill="#8a8e92" opacity="1"/><rect x="49.43" y="5.70" width="1.07" height="8.55" fill="#8a8e92" opacity="1"/><rect x="42.80" y="15.20" width="11.02" height="3.80" fill="#dcdfe1" opacity="1"/><rect x="53.50" y="0.00" width="11.02" height="19.00" fill="#c6c9cc" opacity="1"/><rect x="55.10" y="0.95" width="7.49" height="3.80" fill="#eef0f1" opacity="1"/><rect x="55.85" y="5.70" width="1.07" height="8.55" fill="#8a8e92" opacity="1"/><rect x="60.13" y="5.70" width="1.07" height="8.55" fill="#8a8e92" opacity="1"/><rect x="53.50" y="15.20" width="11.02" height="3.80" fill="#dcdfe1" opacity="1"/><rect x="64.20" y="0.00" width="11.02" height="19.00" fill="#c6c9cc" opacity="1"/><rect x="65.80" y="0.95" width="7.49" height="3.80" fill="#eef0f1" opacity="1"/><rect x="66.55" y="5.70" width="1.07" height="8.55" fill="#8a8e92" opacity="1"/><rect x="70.83" y="5.70" width="1.07" height="8.55" fill="#8a8e92" opacity="1"/><rect x="64.20" y="15.20" width="11.02" height="3.80" fill="#dcdfe1" opacity="1"/><rect x="74.90" y="0.00" width="11.02" height="19.00" fill="#c6c9cc" opacity="1"/><rect x="76.50" y="0.95" width="7.49" height="3.80" fill="#eef0f1" opacity="1"/><rect x="77.25" y="5.70" width="1.07" height="8.55" fill="#8a8e92" opacity="1"/><rect x="81.53" y="5.70" width="1.07" height="8.55" fill="#8a8e92" opacity="1"/><rect x="74.90" y="15.20" width="11.02" height="3.80" fill="#dcdfe1" opacity="1"/></g></g></svg>
<span style="left:760.20px;top:797.54px;font-size:9.6px;line-height:11.52px;color:#eef4fb;font-weight:400;letter-spacing:-0.435px;">cycles-F3-106f-fin...</span>
<div style="left:843.00px;top:769.30px;width:83.50px;height:41.70px;background:#4e80ba;border-radius:2px;box-shadow:inset 0 0 0 1px #2f5d98;"></div>
<svg style="left:844.50px;top:772.30px;" width="80.5" height="19" viewBox="0 0 80.5 19"><clipPath id="cs3"><rect width="80.5" height="19"/></clipPath><g clip-path="url(#cs3)"><g filter="url(#sb)"><rect x="0.00" y="0.00" width="11.02" height="19.00" fill="#7f93b3" opacity="1"/><rect x="0.00" y="1.90" width="11.02" height="9.12" fill="#b53636" opacity="1"/><rect x="1.07" y="3.04" width="3.21" height="5.70" fill="#cf4a4a" opacity="1"/><rect x="7.49" y="3.80" width="2.14" height="9.50" fill="#6c7a90" opacity="1"/><rect x="0.00" y="0.00" width="11.02" height="1.90" fill="#4a4f58" opacity="1"/><rect x="10.70" y="0.00" width="11.02" height="19.00" fill="#7f93b3" opacity="1"/><rect x="10.70" y="1.90" width="11.02" height="9.12" fill="#b53636" opacity="1"/><rect x="11.77" y="3.04" width="3.21" height="5.70" fill="#cf4a4a" opacity="1"/><rect x="18.19" y="3.80" width="2.14" height="9.50" fill="#6c7a90" opacity="1"/><rect x="10.70" y="0.00" width="11.02" height="1.90" fill="#4a4f58" opacity="1"/><rect x="21.40" y="0.00" width="11.02" height="19.00" fill="#7f93b3" opacity="1"/><rect x="21.40" y="1.90" width="11.02" height="9.12" fill="#b53636" opacity="1"/><rect x="22.47" y="3.04" width="3.21" height="5.70" fill="#cf4a4a" opacity="1"/><rect x="28.89" y="3.80" width="2.14" height="9.50" fill="#6c7a90" opacity="1"/><rect x="21.40" y="0.00" width="11.02" height="1.90" fill="#4a4f58" opacity="1"/><rect x="32.10" y="0.00" width="11.02" height="19.00" fill="#7f93b3" opacity="1"/><rect x="32.10" y="1.90" width="11.02" height="9.12" fill="#b53636" opacity="1"/><rect x="33.17" y="3.04" width="3.21" height="5.70" fill="#cf4a4a" opacity="1"/><rect x="39.59" y="3.80" width="2.14" height="9.50" fill="#6c7a90" opacity="1"/><rect x="32.10" y="0.00" width="11.02" height="1.90" fill="#4a4f58" opacity="1"/><rect x="42.80" y="0.00" width="11.02" height="19.00" fill="#7f93b3" opacity="1"/><rect x="42.80" y="1.90" width="11.02" height="9.12" fill="#b53636" opacity="1"/><rect x="43.87" y="3.04" width="3.21" height="5.70" fill="#cf4a4a" opacity="1"/><rect x="50.29" y="3.80" width="2.14" height="9.50" fill="#6c7a90" opacity="1"/><rect x="42.80" y="0.00" width="11.02" height="1.90" fill="#4a4f58" opacity="1"/><rect x="53.50" y="0.00" width="11.02" height="19.00" fill="#5d6a80" opacity="1"/><rect x="55.64" y="0.76" width="6.42" height="3.42" fill="#e4e8ec" opacity="1"/><rect x="54.57" y="5.70" width="2.67" height="9.50" fill="#a03a44" opacity="1"/><rect x="59.92" y="4.75" width="2.35" height="11.40" fill="#c5ccd6" opacity="1"/><rect x="53.50" y="15.20" width="11.02" height="3.80" fill="#7d93b5" opacity="1"/><rect x="64.20" y="0.00" width="11.02" height="19.00" fill="#5d6a80" opacity="1"/><rect x="66.34" y="0.76" width="6.42" height="3.42" fill="#e4e8ec" opacity="1"/><rect x="65.27" y="5.70" width="2.67" height="9.50" fill="#a03a44" opacity="1"/><rect x="70.62" y="4.75" width="2.35" height="11.40" fill="#c5ccd6" opacity="1"/><rect x="64.20" y="15.20" width="11.02" height="3.80" fill="#7d93b5" opacity="1"/><rect x="74.90" y="0.00" width="11.02" height="19.00" fill="#5d6a80" opacity="1"/><rect x="77.04" y="0.76" width="6.42" height="3.42" fill="#e4e8ec" opacity="1"/><rect x="75.97" y="5.70" width="2.67" height="9.50" fill="#a03a44" opacity="1"/><rect x="81.32" y="4.75" width="2.35" height="11.40" fill="#c5ccd6" opacity="1"/><rect x="74.90" y="15.20" width="11.02" height="3.80" fill="#7d93b5" opacity="1"/></g></g></svg>
<span style="left:846.60px;top:797.54px;font-size:9.6px;line-height:11.52px;color:#eef4fb;font-weight:400;letter-spacing:-0.341px;">cycles-F4-106f01...</span>
<div style="left:929.50px;top:769.30px;width:83.50px;height:41.70px;background:#4e80ba;border-radius:2px;box-shadow:inset 0 0 0 1px #2f5d98;"></div>
<svg style="left:931.00px;top:772.30px;" width="80.5" height="19" viewBox="0 0 80.5 19"><clipPath id="cs4"><rect width="80.5" height="19"/></clipPath><g clip-path="url(#cs4)"><g filter="url(#sb)"><rect x="0.00" y="0.00" width="11.02" height="19.00" fill="#8b8f93" opacity="1"/><rect x="0.00" y="0.00" width="11.02" height="3.04" fill="#55585c" opacity="1"/><rect x="3.21" y="2.66" width="4.28" height="13.30" fill="#eef0f1" opacity="1"/><rect x="0.86" y="5.70" width="1.50" height="10.45" fill="#c6c9cc" opacity="1"/><rect x="8.35" y="5.70" width="1.50" height="10.45" fill="#c6c9cc" opacity="1"/><rect x="0.00" y="15.96" width="11.02" height="3.04" fill="#b4b8bb" opacity="1"/><rect x="10.70" y="0.00" width="11.02" height="19.00" fill="#8b8f93" opacity="1"/><rect x="10.70" y="0.00" width="11.02" height="3.04" fill="#55585c" opacity="1"/><rect x="13.91" y="2.66" width="4.28" height="13.30" fill="#eef0f1" opacity="1"/><rect x="11.56" y="5.70" width="1.50" height="10.45" fill="#c6c9cc" opacity="1"/><rect x="19.05" y="5.70" width="1.50" height="10.45" fill="#c6c9cc" opacity="1"/><rect x="10.70" y="15.96" width="11.02" height="3.04" fill="#b4b8bb" opacity="1"/><rect x="21.40" y="0.00" width="11.02" height="19.00" fill="#8b8f93" opacity="1"/><rect x="21.40" y="0.00" width="11.02" height="3.04" fill="#55585c" opacity="1"/><rect x="24.61" y="2.66" width="4.28" height="13.30" fill="#eef0f1" opacity="1"/><rect x="22.26" y="5.70" width="1.50" height="10.45" fill="#c6c9cc" opacity="1"/><rect x="29.75" y="5.70" width="1.50" height="10.45" fill="#c6c9cc" opacity="1"/><rect x="21.40" y="15.96" width="11.02" height="3.04" fill="#b4b8bb" opacity="1"/><rect x="32.10" y="0.00" width="11.02" height="19.00" fill="#8b8f93" opacity="1"/><rect x="32.10" y="0.00" width="11.02" height="3.04" fill="#55585c" opacity="1"/><rect x="35.31" y="2.66" width="4.28" height="13.30" fill="#eef0f1" opacity="1"/><rect x="32.96" y="5.70" width="1.50" height="10.45" fill="#c6c9cc" opacity="1"/><rect x="40.45" y="5.70" width="1.50" height="10.45" fill="#c6c9cc" opacity="1"/><rect x="32.10" y="15.96" width="11.02" height="3.04" fill="#b4b8bb" opacity="1"/><rect x="42.80" y="0.00" width="11.02" height="19.00" fill="#8b8f93" opacity="1"/><rect x="42.80" y="0.00" width="11.02" height="3.04" fill="#55585c" opacity="1"/><rect x="46.01" y="2.66" width="4.28" height="13.30" fill="#eef0f1" opacity="1"/><rect x="43.66" y="5.70" width="1.50" height="10.45" fill="#c6c9cc" opacity="1"/><rect x="51.15" y="5.70" width="1.50" height="10.45" fill="#c6c9cc" opacity="1"/><rect x="42.80" y="15.96" width="11.02" height="3.04" fill="#b4b8bb" opacity="1"/><rect x="53.50" y="0.00" width="11.02" height="19.00" fill="#8b8f93" opacity="1"/><rect x="53.50" y="0.00" width="11.02" height="3.04" fill="#55585c" opacity="1"/><rect x="56.71" y="2.66" width="4.28" height="13.30" fill="#eef0f1" opacity="1"/><rect x="54.36" y="5.70" width="1.50" height="10.45" fill="#c6c9cc" opacity="1"/><rect x="61.85" y="5.70" width="1.50" height="10.45" fill="#c6c9cc" opacity="1"/><rect x="53.50" y="15.96" width="11.02" height="3.04" fill="#b4b8bb" opacity="1"/><rect x="64.20" y="0.00" width="11.02" height="19.00" fill="#8b8f93" opacity="1"/><rect x="64.20" y="0.00" width="11.02" height="3.04" fill="#55585c" opacity="1"/><rect x="67.41" y="2.66" width="4.28" height="13.30" fill="#eef0f1" opacity="1"/><rect x="65.06" y="5.70" width="1.50" height="10.45" fill="#c6c9cc" opacity="1"/><rect x="72.55" y="5.70" width="1.50" height="10.45" fill="#c6c9cc" opacity="1"/><rect x="64.20" y="15.96" width="11.02" height="3.04" fill="#b4b8bb" opacity="1"/><rect x="74.90" y="0.00" width="11.02" height="19.00" fill="#8b8f93" opacity="1"/><rect x="74.90" y="0.00" width="11.02" height="3.04" fill="#55585c" opacity="1"/><rect x="78.11" y="2.66" width="4.28" height="13.30" fill="#eef0f1" opacity="1"/><rect x="75.76" y="5.70" width="1.50" height="10.45" fill="#c6c9cc" opacity="1"/><rect x="83.25" y="5.70" width="1.50" height="10.45" fill="#c6c9cc" opacity="1"/><rect x="74.90" y="15.96" width="11.02" height="3.04" fill="#b4b8bb" opacity="1"/></g></g></svg>
<span style="left:933.10px;top:797.54px;font-size:9.6px;line-height:11.52px;color:#eef4fb;font-weight:400;letter-spacing:-0.341px;">cycles-F5-106f00...</span>
<div style="left:1015.60px;top:769.30px;width:139.00px;height:41.70px;background:#4e80ba;border-radius:2px;box-shadow:inset 0 0 0 1px #2f5d98;"></div>
<svg style="left:1017.10px;top:772.30px;" width="135.9999999999999" height="19" viewBox="0 0 136.0 19"><clipPath id="cs5"><rect width="136.0" height="19"/></clipPath><g clip-path="url(#cs5)"><g filter="url(#sb)"><rect x="0.00" y="0.00" width="11.02" height="9.50" fill="#bccae0" opacity="1"/><rect x="0.00" y="9.50" width="11.02" height="9.50" fill="#9fb4d2" opacity="1"/><path d="M0.54 19L4.49 10H6.21L10.16 19Z" fill="#eef3f8"/><rect x="2.14" y="8.600" width="6.42" height="1.800" fill="#e6edf4"/><ellipse cx="5.35" cy="4.800" rx="3.21" ry="3.300" fill="#e8dfae"/><rect x="10.70" y="0.00" width="11.02" height="9.50" fill="#bccae0" opacity="1"/><rect x="10.70" y="9.50" width="11.02" height="9.50" fill="#9fb4d2" opacity="1"/><path d="M11.23 19L15.19 10H16.91L20.86 19Z" fill="#eef3f8"/><rect x="12.84" y="8.600" width="6.42" height="1.800" fill="#e6edf4"/><ellipse cx="16.05" cy="4.800" rx="3.21" ry="3.300" fill="#e8dfae"/><rect x="21.40" y="0.00" width="11.02" height="9.50" fill="#bccae0" opacity="1"/><rect x="21.40" y="9.50" width="11.02" height="9.50" fill="#9fb4d2" opacity="1"/><path d="M21.93 19L25.89 10H27.61L31.56 19Z" fill="#eef3f8"/><rect x="23.54" y="8.600" width="6.42" height="1.800" fill="#e6edf4"/><ellipse cx="26.75" cy="4.800" rx="3.21" ry="3.300" fill="#e8dfae"/><rect x="32.10" y="0.00" width="11.02" height="9.50" fill="#bccae0" opacity="1"/><rect x="32.10" y="9.50" width="11.02" height="9.50" fill="#9fb4d2" opacity="1"/><path d="M32.63 19L36.59 10H38.31L42.26 19Z" fill="#eef3f8"/><rect x="34.24" y="8.600" width="6.42" height="1.800" fill="#e6edf4"/><ellipse cx="37.45" cy="4.800" rx="3.21" ry="3.300" fill="#e8dfae"/><rect x="42.80" y="0.00" width="11.02" height="9.50" fill="#bccae0" opacity="1"/><rect x="42.80" y="9.50" width="11.02" height="9.50" fill="#9fb4d2" opacity="1"/><path d="M43.33 19L47.29 10H49.01L52.96 19Z" fill="#eef3f8"/><rect x="44.94" y="8.600" width="6.42" height="1.800" fill="#e6edf4"/><ellipse cx="48.15" cy="4.800" rx="3.21" ry="3.300" fill="#e8dfae"/><rect x="53.50" y="0.00" width="11.02" height="9.50" fill="#bccae0" opacity="1"/><rect x="53.50" y="9.50" width="11.02" height="9.50" fill="#9fb4d2" opacity="1"/><path d="M54.03 19L57.99 10H59.71L63.66 19Z" fill="#eef3f8"/><rect x="55.64" y="8.600" width="6.42" height="1.800" fill="#e6edf4"/><ellipse cx="58.85" cy="4.800" rx="3.21" ry="3.300" fill="#e8dfae"/><rect x="64.20" y="0.00" width="11.02" height="9.50" fill="#bccae0" opacity="1"/><rect x="64.20" y="9.50" width="11.02" height="9.50" fill="#9fb4d2" opacity="1"/><path d="M64.73 19L68.69 10H70.41L74.36 19Z" fill="#eef3f8"/><rect x="66.34" y="8.600" width="6.42" height="1.800" fill="#e6edf4"/><ellipse cx="69.55" cy="4.800" rx="3.21" ry="3.300" fill="#e8dfae"/><rect x="74.90" y="0.00" width="11.02" height="9.50" fill="#bccae0" opacity="1"/><rect x="74.90" y="9.50" width="11.02" height="9.50" fill="#9fb4d2" opacity="1"/><path d="M75.43 19L79.39 10H81.11L85.06 19Z" fill="#eef3f8"/><rect x="77.04" y="8.600" width="6.42" height="1.800" fill="#e6edf4"/><ellipse cx="80.25" cy="4.800" rx="3.21" ry="3.300" fill="#e8dfae"/><rect x="85.60" y="0.00" width="11.02" height="9.50" fill="#bccae0" opacity="1"/><rect x="85.60" y="9.50" width="11.02" height="9.50" fill="#9fb4d2" opacity="1"/><path d="M86.13 19L90.09 10H91.81L95.76 19Z" fill="#eef3f8"/><rect x="87.74" y="8.600" width="6.42" height="1.800" fill="#e6edf4"/><ellipse cx="90.95" cy="4.800" rx="3.21" ry="3.300" fill="#e8dfae"/><rect x="96.30" y="0.00" width="11.02" height="9.50" fill="#bccae0" opacity="1"/><rect x="96.30" y="9.50" width="11.02" height="9.50" fill="#9fb4d2" opacity="1"/><path d="M96.83 19L100.79 10H102.51L106.47 19Z" fill="#eef3f8"/><rect x="98.44" y="8.600" width="6.42" height="1.800" fill="#e6edf4"/><ellipse cx="101.65" cy="4.800" rx="3.21" ry="3.300" fill="#e8dfae"/><rect x="107.00" y="0.00" width="11.02" height="9.50" fill="#bccae0" opacity="1"/><rect x="107.00" y="9.50" width="11.02" height="9.50" fill="#9fb4d2" opacity="1"/><path d="M107.53 19L111.49 10H113.21L117.16 19Z" fill="#eef3f8"/><rect x="109.14" y="8.600" width="6.42" height="1.800" fill="#e6edf4"/><ellipse cx="112.35" cy="4.800" rx="3.21" ry="3.300" fill="#e8dfae"/><rect x="117.70" y="0.00" width="11.02" height="9.50" fill="#bccae0" opacity="1"/><rect x="117.70" y="9.50" width="11.02" height="9.50" fill="#9fb4d2" opacity="1"/><path d="M118.23 19L122.19 10H123.91L127.86 19Z" fill="#eef3f8"/><rect x="119.84" y="8.600" width="6.42" height="1.800" fill="#e6edf4"/><ellipse cx="123.05" cy="4.800" rx="3.21" ry="3.300" fill="#e8dfae"/><rect x="128.40" y="0.00" width="11.02" height="9.50" fill="#bccae0" opacity="1"/><rect x="128.40" y="9.50" width="11.02" height="9.50" fill="#9fb4d2" opacity="1"/><path d="M128.93 19L132.89 10H134.61L138.56 19Z" fill="#eef3f8"/><rect x="130.54" y="8.600" width="6.42" height="1.800" fill="#e6edf4"/><ellipse cx="133.75" cy="4.800" rx="3.21" ry="3.300" fill="#e8dfae"/></g></g></svg>
<span style="left:1019.20px;top:797.54px;font-size:9.6px;line-height:11.52px;color:#eef4fb;font-weight:400;letter-spacing:0.072px;">cycles-F6-174f0106-0280.mkv</span>
<div style="left:663.90px;top:728.30px;width:10.30px;height:40.80px;background:#2b7ba6;border-radius:2.500px 2.500px 0 0;"></div>
<div style="left:663.90px;top:747.80px;width:10.30px;height:1.00px;background:#226a92;"></div>
<div style="left:836.80px;top:728.30px;width:10.30px;height:40.80px;background:#2b7ba6;border-radius:2.500px 2.500px 0 0;"></div>
<div style="left:836.80px;top:747.80px;width:10.30px;height:1.00px;background:#226a92;"></div>
<div style="left:1010.50px;top:728.30px;width:10.30px;height:40.80px;background:#2b7ba6;border-radius:2.500px 2.500px 0 0;"></div>
<div style="left:1010.50px;top:747.80px;width:10.30px;height:1.00px;background:#226a92;"></div>
<div style="left:664.20px;top:816.20px;width:10.50px;height:31.50px;background:#4a9468;border-radius:0 0 2.500px 2.500px;"></div>
<svg style="left:665.70px;top:817.00px;" width="9" height="9" viewBox="0 0 9 9"><path d="M8.500 0.500V8.500L0.500 4.500Z" fill="#eef6ee"/></svg>
<div style="left:836.80px;top:816.20px;width:10.50px;height:31.50px;background:#4a9468;border-radius:0 0 2.500px 2.500px;"></div>
<svg style="left:838.30px;top:817.00px;" width="9" height="9" viewBox="0 0 9 9"><path d="M8.500 0.500V8.500L0.500 4.500Z" fill="#eef6ee"/></svg>
<div style="left:1010.60px;top:816.20px;width:10.50px;height:31.50px;background:#4a9468;border-radius:0 0 2.500px 2.500px;"></div>
<svg style="left:1012.10px;top:817.00px;" width="9" height="9" viewBox="0 0 9 9"><path d="M8.500 0.500V8.500L0.500 4.500Z" fill="#eef6ee"/></svg>
<div style="left:669.70px;top:850.70px;width:84.90px;height:30.80px;background:#3d7f59;border-radius:2.500px;"></div>
<div style="left:669.70px;top:850.70px;width:84.90px;height:10.50px;background:#4b8d67;border-radius:2.500px 2.500px 0 0;"></div>
<div style="left:670.20px;top:854.50px;width:83.90px;height:1.30px;background:#d8ecd8;"></div>
<span style="left:673.40px;top:867.62px;font-size:9.8px;line-height:11.76px;color:#eef6ee;font-weight:400;letter-spacing:-0.399px;">sleep-water-...</span>
<svg style="left:736.60px;top:866.50px;" width="14" height="10" viewBox="0 0 14 10"><path d="M0.800 5C2.500 -0.500 4.500 -0.500 6.500 5S10.500 10.500 12.500 5" fill="none" stroke="#1f4a2f" stroke-width="1.700"/></svg>
<div style="left:842.60px;top:850.70px;width:85.40px;height:30.80px;background:#3d7f59;border-radius:2.500px;"></div>
<div style="left:842.60px;top:850.70px;width:85.40px;height:10.50px;background:#4b8d67;border-radius:2.500px 2.500px 0 0;"></div>
<div style="left:843.10px;top:854.50px;width:84.40px;height:1.30px;background:#d8ecd8;"></div>
<span style="left:846.30px;top:867.62px;font-size:9.8px;line-height:11.76px;color:#eef6ee;font-weight:400;letter-spacing:-0.399px;">sleep-water-...</span>
<svg style="left:910.00px;top:866.50px;" width="14" height="10" viewBox="0 0 14 10"><path d="M0.800 5C2.500 -0.500 4.500 -0.500 6.500 5S10.500 10.500 12.500 5" fill="none" stroke="#1f4a2f" stroke-width="1.700"/></svg>
<div style="left:1015.60px;top:850.70px;width:139.40px;height:30.80px;background:#3d7f59;border-radius:2.500px;"></div>
<div style="left:1015.60px;top:850.70px;width:139.40px;height:10.50px;background:#4b8d67;border-radius:2.500px 2.500px 0 0;"></div>
<div style="left:1016.10px;top:854.50px;width:138.40px;height:1.30px;background:#d8ecd8;"></div>
<span style="left:1019.30px;top:867.62px;font-size:9.8px;line-height:11.76px;color:#eef6ee;font-weight:400;letter-spacing:-0.258px;">sleep-water-316041.mp3</span>
<svg style="left:1137.00px;top:866.50px;" width="14" height="10" viewBox="0 0 14 10"><path d="M0.800 5C2.500 -0.500 4.500 -0.500 6.500 5S10.500 10.500 12.500 5" fill="none" stroke="#1f4a2f" stroke-width="1.700"/></svg>
<div style="left:1155px;top:850.700px;width:13px;height:30.800px;background:linear-gradient(90deg,#35d035 0%,#2fb82f 35%,rgba(47,170,47,0.35) 75%,rgba(40,40,47,0) 100%);"></div>
<div style="left:1154.30px;top:850.50px;width:2.20px;height:31.00px;background:#7dff6a;"></div>
<div style="left:1156.50px;top:851.00px;width:8.00px;height:10.00px;background:#2a3a2e;"></div>
<div style="left:1064.00px;top:690.00px;width:1.40px;height:213.00px;background:#e8503f;"></div>
<svg style="left:1058.70px;top:682.50px;" width="12" height="10" viewBox="0 0 12 10"><path d="M0.500 0.500H11.500V4.500L6 9.500L0.500 4.500Z" fill="#e8503f"/></svg>
<svg style="left:88.00px;top:915.50px;" width="17" height="16" viewBox="0 0 17 16"><circle cx="8.500" cy="4.300" r="3.500" fill="#f2f2f2"/><circle cx="4.300" cy="11.300" r="3.500" fill="#f2f2f2"/><circle cx="12.700" cy="11.300" r="3.500" fill="#f2f2f2"/><circle cx="8.500" cy="8.800" r="1.300" fill="#1a1a1d"/></svg>
<span style="left:110.00px;top:917.52px;font-size:10.8px;line-height:12.96px;color:#e8e8e8;font-weight:700;letter-spacing:-0.124px;">DaVinci Resolve 18.5</span>
<div style="left:613.30px;top:910.50px;width:95.00px;height:24.00px;background:#000;"></div>
<div style="left:613.30px;top:934.60px;width:95.00px;height:1.70px;background:#e0483c;"></div>
<svg style="left:459.50px;top:918.00px;" width="15" height="12" viewBox="0 0 15 12"><rect x="0.600" y="0.600" width="13.800" height="10.800" rx="1.200" fill="#35353b" stroke="#4e4e54" stroke-width="1"/><path d="M3 8.500L5.500 6L7 7.500" fill="none" stroke="#5d5d62" stroke-width="1"/></svg>
<svg style="left:554.00px;top:917.00px;" width="20" height="13" viewBox="0 0 20 13"><path d="M6.500 1.500H18.500L15.500 11.500H3.500Z" fill="none" stroke="#5d5d62" stroke-width="1.300"/><path d="M12 1.500L9.500 11.500" stroke="#5d5d62" stroke-width="1.300"/><path d="M0.500 4.500H4M0 7.500H3" stroke="#4e4e54" stroke-width="1"/></svg>
<svg style="left:651.50px;top:915.50px;" width="19" height="16" viewBox="0 0 19 16"><rect x="0.500" y="3.500" width="7.500" height="2.300" fill="#4aa0c8"/><rect x="10.500" y="3.500" width="8" height="2.300" fill="#4aa0c8"/><rect x="2.500" y="7.500" width="5.500" height="2.300" fill="#58b078"/><rect x="10.500" y="7.500" width="6" height="2.300" fill="#58b078"/><rect x="0.500" y="11.500" width="7.500" height="2.300" fill="#4aa0c8"/><rect x="10.500" y="11.500" width="8" height="2.300" fill="#4aa0c8"/><path d="M9.300 1.500V15.500" stroke="#e0483c" stroke-width="1.200"/><path d="M7.800 0.500h3l-1.500 2z" fill="#e0483c"/></svg>
<svg style="left:751.00px;top:916.00px;" width="16" height="16" viewBox="0 0 16 16"><path d="M5 14L11.500 4.500" stroke="#4e4e54" stroke-width="3" stroke-linecap="round"/><path d="M2 2l1.500 1.500M6.500 0.500v2M1 6.500h2" stroke="#4e4e54" stroke-width="1"/></svg>
<svg style="left:846.50px;top:916.00px;" width="16" height="16" viewBox="0 0 16 16"><circle cx="13.8" cy="8.0" r="1.2" fill="#4e4e54"/><circle cx="12.1" cy="12.1" r="0.9" fill="#4e4e54"/><circle cx="8.0" cy="13.8" r="1.2" fill="#4e4e54"/><circle cx="3.9" cy="12.1" r="0.9" fill="#4e4e54"/><circle cx="2.2" cy="8.0" r="1.2" fill="#4e4e54"/><circle cx="3.9" cy="3.9" r="0.9" fill="#4e4e54"/><circle cx="8.0" cy="2.2" r="1.2" fill="#4e4e54"/><circle cx="12.1" cy="3.9" r="0.9" fill="#4e4e54"/><circle cx="8" cy="8" r="1" fill="#4e4e54"/></svg>
<svg style="left:944.50px;top:917.00px;" width="14" height="14" viewBox="0 0 14 14"><path d="M4.500 11V3L11.500 1.500V9.500" fill="none" stroke="#6c6c71" stroke-width="1.400"/><ellipse cx="3" cy="11" rx="2.100" ry="1.700" fill="#6c6c71"/><ellipse cx="10" cy="9.600" rx="2.100" ry="1.700" fill="#6c6c71"/></svg>
<svg style="left:1039.50px;top:916.00px;" width="16" height="16" viewBox="0 0 16 16"><path d="M14.500 1.500C10 1.500 6.500 4.500 5 9L7.500 11.500C11.500 10 14.500 6.500 14.500 1.500Z" fill="none" stroke="#4e4e54" stroke-width="1.200"/><circle cx="10.500" cy="5.500" r="1.300" fill="#4e4e54"/><path d="M4.500 9.500L1.500 10.500M6.500 12L5.500 14.500M2 14L4.500 11.500" stroke="#4e4e54" stroke-width="1.100"/></svg>
<svg style="left:1372.50px;top:917.50px;" width="13" height="12" viewBox="0 0 13 12"><path d="M6.500 0.800L0.500 6.300H2.300V11.500H5.300V8H7.700V11.500H10.700V6.300H12.500Z" fill="#9a9a9d"/></svg>
<svg style="left:1412.00px;top:917.20px;" width="14" height="14" viewBox="0 0 14 14"><rect x="5.900" y="0.300" width="2.200" height="2.800" fill="#a4a4a8" transform="rotate(0 7 7)"/><rect x="5.900" y="0.300" width="2.200" height="2.800" fill="#a4a4a8" transform="rotate(45 7 7)"/><rect x="5.900" y="0.300" width="2.200" height="2.800" fill="#a4a4a8" transform="rotate(90 7 7)"/><rect x="5.900" y="0.300" width="2.200" height="2.800" fill="#a4a4a8" transform="rotate(135 7 7)"/><rect x="5.900" y="0.300" width="2.200" height="2.800" fill="#a4a4a8" transform="rotate(180 7 7)"/><rect x="5.900" y="0.300" width="2.200" height="2.800" fill="#a4a4a8" transform="rotate(225 7 7)"/><rect x="5.900" y="0.300" width="2.200" height="2.800" fill="#a4a4a8" transform="rotate(270 7 7)"/><rect x="5.900" y="0.300" width="2.200" height="2.800" fill="#a4a4a8" transform="rotate(315 7 7)"/><circle cx="7" cy="7" r="4.300" fill="#a4a4a8"/><circle cx="7" cy="7" r="2.500" fill="#1a1a1d"/></svg>
</div>
</body></html>
